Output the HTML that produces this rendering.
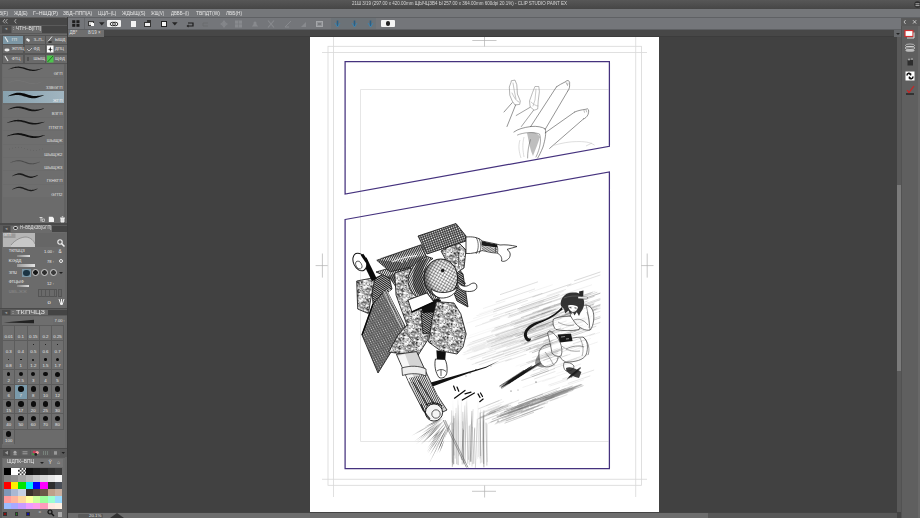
<!DOCTYPE html>
<html><head><meta charset="utf-8">
<style>
*{margin:0;padding:0;box-sizing:border-box}
html,body{width:920px;height:518px;overflow:hidden;background:#434343;font-family:"Liberation Sans",sans-serif}
.a{position:absolute}
.t{position:absolute;white-space:nowrap;line-height:1;color:#e6e6e6}
svg{overflow:visible}
</style></head><body>
<div class="a" style="left:0px;top:0px;width:920px;height:9px;background:linear-gradient(#575757,#464646);"></div>
<div id="f1" class="t" style="left:352px;top:2.2px;font-size:4.6px;color:#d6d6d6;transform:scaleX(0.9764);transform-origin:0 0;">21Ш 3/19 (297.00 x 420.00mm ЩЫЧЦЗB4 Ы 257.00 x 364.00mm 600dpi 20.1%) - CLIP STUDIO PAINT EX</div>
<svg class="a" style="left:913.5px;top:1px" width="7" height="7" viewBox="0 0 7 7"><circle cx="3.5" cy="3.5" r="3.2" fill="#2e2e2e"/><path d="M1.5 2.8 H5.5 M1.5 4.6 H5.5" stroke="#ccc" stroke-width="0.8"/></svg>
<div class="a" style="left:0px;top:9px;width:920px;height:8px;background:#75777a;"></div>
<div id="f2" class="t" style="left:-1px;top:11.3px;font-size:5px;color:#e4e4e4;transform:scaleX(0.9246);transform-origin:0 0;">В(F)</div>
<div id="f3" class="t" style="left:13.6px;top:11.3px;font-size:5px;color:#e4e4e4;transform:scaleX(0.9269);transform-origin:0 0;">ЖД(E)</div>
<div id="f4" class="t" style="left:33.3px;top:11.3px;font-size:5px;color:#e4e4e4;transform:scaleX(1.0533);transform-origin:0 0;">Г–НШД(P)</div>
<div id="f5" class="t" style="left:63.2px;top:11.3px;font-size:5px;color:#e4e4e4;transform:scaleX(0.9759);transform-origin:0 0;">ЗБД–ППП(A)</div>
<div id="f6" class="t" style="left:97.8px;top:11.3px;font-size:5px;color:#e4e4e4;transform:scaleX(0.9398);transform-origin:0 0;">ЦЦЛ–(L)</div>
<div id="f7" class="t" style="left:121.6px;top:11.3px;font-size:5px;color:#e4e4e4;transform:scaleX(0.9875);transform-origin:0 0;">ЖДЫЩ(S)</div>
<div id="f8" class="t" style="left:151px;top:11.3px;font-size:5px;color:#e4e4e4;transform:scaleX(0.8133);transform-origin:0 0;">ЖЩ(V)</div>
<div id="f9" class="t" style="left:171px;top:11.3px;font-size:5px;color:#e4e4e4;transform:scaleX(0.8636);transform-origin:0 0;">ДВВБ–(I)</div>
<div id="f10" class="t" style="left:196px;top:11.3px;font-size:5px;color:#e4e4e4;transform:scaleX(0.9802);transform-origin:0 0;">ТВПДТ(W)</div>
<div id="f11" class="t" style="left:226px;top:11.3px;font-size:5px;color:#e4e4e4;transform:scaleX(0.9499);transform-origin:0 0;">ЛВБ(H)</div>
<div class="a" style="left:0px;top:17px;width:920px;height:1px;background:#5f6164;"></div>
<div class="a" style="left:67px;top:18px;width:834px;height:11.5px;background:#74767a;"></div>
<div class="a" style="left:67px;top:28.5px;width:834px;height:1px;background:#5e6063;"></div>
<svg class="a" style="left:71.5px;top:20.3px" width="8" height="7" viewBox="0 0 8 7"><rect x="0.2" y="0.2" width="3.1" height="2.9" fill="#1e1e1e"/><rect x="4.4" y="0.2" width="3.1" height="2.9" fill="#1e1e1e"/><rect x="0.2" y="3.9" width="3.1" height="2.9" fill="#1e1e1e"/><rect x="4.4" y="3.9" width="3.1" height="2.9" fill="#1e1e1e"/></svg>
<div class="a" style="left:83.5px;top:18px;width:1px;height:10.5px;background:#66686b;"></div>
<div class="a" style="left:88px;top:21px;width:5.5px;height:4.5px;background:#cfcfcf;border:0.8px solid #3a3a3a"></div>
<div class="a" style="left:91px;top:23.3px;width:3.2px;height:3px;background:#fafafa;"></div>
<svg class="a" style="left:99.3px;top:22px" width="6" height="4" viewBox="0 0 6 4"><path d="M0 0.3 H5.6 L2.8 3.6Z" fill="#262626"/></svg>
<div class="a" style="left:106.5px;top:20px;width:14.5px;height:7px;background:#f2f2f2;border-radius:1px"></div>
<svg class="a" style="left:109px;top:20.5px" width="10" height="6" viewBox="0 0 10 6"><ellipse cx="3.8" cy="3" rx="2.6" ry="1.8" fill="none" stroke="#222" stroke-width="0.9"/><ellipse cx="6.2" cy="3" rx="2.6" ry="1.8" fill="none" stroke="#222" stroke-width="0.9"/></svg>
<div class="a" style="left:131px;top:20.5px;width:4.5px;height:6px;background:#f4f4f4;"></div>
<div class="a" style="left:144px;top:22px;width:7px;height:4.5px;background:#eee;border:0.6px solid #333"></div>
<div class="a" style="left:147px;top:20.2px;width:4px;height:2.5px;background:#333;"></div>
<div class="a" style="left:161px;top:20.5px;width:5.5px;height:6px;background:#f6f6f6;border:0.8px solid #222"></div>
<svg class="a" style="left:171.5px;top:22px" width="6" height="4" viewBox="0 0 6 4"><path d="M0 0.3 H5.6 L2.8 3.6Z" fill="#262626"/></svg>
<svg class="a" style="left:186px;top:20.5px" width="9" height="7" viewBox="0 0 9 7"><path d="M2 2 H7 V5 H2" fill="none" stroke="#1c1c1c" stroke-width="1.2"/><path d="M0.5 5 L2.5 3.5 L2.5 6.5Z" fill="#1c1c1c"/></svg>
<svg class="a" style="left:201px;top:20.5px" width="9" height="7" viewBox="0 0 9 7"><path d="M7 2 H2 V5 H7" fill="none" stroke="#6a6c6f" stroke-width="1"/></svg>
<svg class="a" style="left:215px;top:19px" width="112" height="10" viewBox="0 0 112 10" opacity="0.55"><path d="M9 1.5 V8.5 M5.5 5 H12.5" stroke="#9a9ca0" stroke-width="1.2"/><circle cx="9" cy="5" r="2.2" fill="none" stroke="#9a9ca0" stroke-width="0.8"/><rect x="20" y="1.5" width="7" height="7" fill="#9a9ca0"/><path d="M20 5 H27 M23.5 1.5 V8.5" stroke="#76787b" stroke-width="0.6"/><path d="M37 7.5 L40 3 L43 7.5 Z" fill="#9a9ca0"/><circle cx="40" cy="4" r="1.5" fill="#9a9ca0"/><path d="M53 1.5 L59 8.5 M59 1.5 L53 8.5" stroke="#9a9ca0" stroke-width="1.1"/><path d="M70 8 L76 2 M70 8 H74" stroke="#9a9ca0" stroke-width="1"/><path d="M86 8 L91 3 L91 8Z" fill="#9a9ca0"/></svg>
<div class="a" style="left:316px;top:20.5px;width:6.5px;height:6.5px;background:#8e9094;border:0.8px solid #a4a6a9"></div>
<div class="a" style="left:318px;top:22.5px;width:2.5px;height:2.5px;background:#77797c;"></div>
<div class="a" style="left:331px;top:18px;width:45px;height:10.5px;background:#6c7277;"></div>
<svg class="a" style="left:334.4px;top:19.5px" width="7" height="8" viewBox="0 0 7 8"><path d="M3.5 0.5 V6" stroke="#2a5f86" stroke-width="1.6"/><path d="M1 3 L3.5 7 L6 3" fill="none" stroke="#3a86b3" stroke-width="0.9"/></svg>
<svg class="a" style="left:351px;top:19.5px" width="7" height="8" viewBox="0 0 7 8"><path d="M3.5 0.5 V6" stroke="#2a5f86" stroke-width="1.6"/><path d="M1 3 L3.5 7 L6 3" fill="none" stroke="#3a86b3" stroke-width="0.9"/></svg>
<svg class="a" style="left:366.6px;top:19.5px" width="7" height="8" viewBox="0 0 7 8"><path d="M3.5 0.5 V6" stroke="#2a5f86" stroke-width="1.6"/><path d="M1 3 L3.5 7 L6 3" fill="none" stroke="#3a86b3" stroke-width="0.9"/></svg>
<div class="a" style="left:381px;top:20.2px;width:14px;height:6.5px;background:#f4f4f4;border-radius:1px"></div>
<div class="a" style="left:385.5px;top:21.2px;width:4.6px;height:4.6px;border-radius:50%;background:#222"></div>
<div class="a" style="left:67px;top:29.5px;width:830px;height:8px;background:#474747;"></div>
<div class="a" style="left:67px;top:36px;width:830px;height:1px;background:#3c3c3c;"></div>
<div class="a" style="left:68px;top:30px;width:36px;height:6.5px;background:#6e6e6e;"></div>
<div class="t" style="left:69.5px;top:31.4px;font-size:4.5px;color:#dcdcdc;">ДВ*</div>
<div class="t" style="left:88px;top:31.4px;font-size:4.5px;color:#dcdcdc;">8/19 ×</div>
<div class="a" style="left:894px;top:30px;width:7px;height:7px;background:#66686b;"></div>
<div class="a" style="left:895.5px;top:32.5px;width:0;height:0;border-left:2px solid transparent;border-right:2px solid transparent;border-top:2.5px solid #222"></div>
<div class="a" style="left:67px;top:37px;width:830px;height:475px;background:#414141;"></div>
<div class="a" style="left:310px;top:37px;width:349px;height:475px;background:#ffffff;"></div>
<div class="a" style="left:67px;top:512.8px;width:830px;height:5.2px;background:#575757;"></div>
<div class="a" style="left:68px;top:513.3px;width:640px;height:4.7px;background:#6d6d6d;"></div>
<div class="a" style="left:78px;top:514px;width:25px;height:4px;background:#5a5a5a;border-radius:1px"></div>
<div class="t" style="left:89px;top:513.8px;font-size:4.4px;color:#e0e0e0;">20.1%</div>
<div class="a" style="left:110px;top:513px;width:0;height:0;border-left:7px solid transparent;border-right:7px solid transparent;border-bottom:5px solid #333"></div>
<div class="a" style="left:897px;top:37px;width:4px;height:475px;background:#595959;"></div>
<div class="a" style="left:897px;top:185px;width:4px;height:186px;background:#7b7b7b;"></div>
<div class="a" style="left:901px;top:18px;width:19px;height:500px;background:#5f5f5f;"></div>
<div class="a" style="left:901px;top:18px;width:19px;height:8px;background:#595959;"></div>
<svg class="a" style="left:901px;top:18px" width="19" height="8" viewBox="0 0 19 8"><path d="M4.6 2 L3 4 L4.6 6" fill="none" stroke="#c8c8c8" stroke-width="0.9"/><path d="M12 2.2 L15.2 5.6 M15.2 2.2 L12 5.6" stroke="#d0d0d0" stroke-width="0.9"/></svg>
<div class="a" style="left:917.5px;top:26px;width:2.5px;height:492px;background:#686868;"></div>
<div class="a" style="left:901px;top:26px;width:1px;height:492px;background:#525252;"></div>
<div class="a" style="left:0px;top:17px;width:67px;height:501px;background:#5c5c5c;"></div>
<div class="a" style="left:64.5px;top:17px;width:2.5px;height:501px;background:#676767;"></div>
<div class="a" style="left:66.5px;top:17px;width:1px;height:501px;background:#3c3c3c;"></div>
<div class="a" style="left:0px;top:17.5px;width:66.5px;height:7.5px;background:#474747;"></div>
<svg class="a" style="left:0;top:17px" width="20" height="8" viewBox="0 0 20 8"><path d="M5 2 L3 4.2 L5 6.4 M7.5 2 L5.5 4.2 L7.5 6.4 M16.2 2 L14.6 4.2 L16.2 6.4" fill="none" stroke="#b0b0b0" stroke-width="0.9"/></svg>
<div class="a" style="left:0px;top:25px;width:66.5px;height:9px;background:#5a5a5a;"></div>
<div class="a" style="left:2px;top:26px;width:9px;height:7px;background:#4a4a4a;"></div>
<div class="t" style="left:4px;top:27.3px;font-size:4px;color:#9a9a9a;">◄</div>
<div class="a" style="left:11.5px;top:26px;width:30.5px;height:7px;background:#6b6b6b;"></div>
<div id="f12" class="t" style="left:13px;top:27.4px;font-size:4.5px;color:#e0e0e0;transform:scaleX(1.1117);transform-origin:0 0;">: ЧТН–В[ГП]</div>
<div class="a" style="left:42px;top:26px;width:24.5px;height:7px;background:#454545;"></div>
<div class="a" style="left:0px;top:33.5px;width:66.5px;height:1.5px;background:#6a6a6a;"></div>
<div class="a" style="left:1.5px;top:35px;width:65px;height:29px;background:#555555;"></div>
<div class="a" style="left:2.7px;top:35.6px;width:20.5px;height:8.1px;background:#7c97a5;"></div>
<div class="t" style="left:11.7px;top:37.6px;font-size:4.2px;color:#e8e8e8;">ГП</div>
<div class="a" style="left:24.6px;top:35.6px;width:20.2px;height:8.1px;background:#6a6a6a;"></div>
<div class="t" style="left:33.6px;top:37.6px;font-size:4.2px;color:#e8e8e8;">З–П–</div>
<div class="a" style="left:46px;top:35.6px;width:20.5px;height:8.1px;background:#6a6a6a;"></div>
<div class="t" style="left:55px;top:37.6px;font-size:4.2px;color:#e8e8e8;">ЫШД</div>
<div class="a" style="left:2.7px;top:45.3px;width:20.5px;height:8.1px;background:#6a6a6a;"></div>
<div class="t" style="left:11.7px;top:47.3px;font-size:4.2px;color:#e8e8e8;">ЖПЛЦ</div>
<div class="a" style="left:24.6px;top:45.3px;width:20.2px;height:8.1px;background:#6a6a6a;"></div>
<div class="t" style="left:33.6px;top:47.3px;font-size:4.2px;color:#e8e8e8;">ФД</div>
<div class="a" style="left:46px;top:45.3px;width:20.5px;height:8.1px;background:#6a6a6a;"></div>
<div class="t" style="left:55px;top:47.3px;font-size:4.2px;color:#e8e8e8;">ДПЦ</div>
<div class="a" style="left:2.7px;top:54.8px;width:20.5px;height:8.4px;background:#6a6a6a;"></div>
<div class="t" style="left:11.7px;top:56.8px;font-size:4.2px;color:#e8e8e8;">ФТЦ</div>
<div class="a" style="left:24.6px;top:54.8px;width:20.2px;height:8.4px;background:#6a6a6a;"></div>
<div class="t" style="left:33.6px;top:56.8px;font-size:4.2px;color:#e8e8e8;">ШЫЩ</div>
<div class="a" style="left:46px;top:54.8px;width:20.5px;height:8.4px;background:#6a6a6a;"></div>
<div class="t" style="left:55px;top:56.8px;font-size:4.2px;color:#e8e8e8;">ЩФД</div>
<svg class="a" style="left:0;top:0" width="67" height="70" viewBox="0 0 67 70"><path d="M5 37 L8 42" stroke="#eee" stroke-width="1.1"/><path d="M27 38 l3 2 l-1 2 l-3 -2z" fill="#eee"/><path d="M52 36.5 L48 41.5" stroke="#eee" stroke-width="0.9"/><ellipse cx="50" cy="42" rx="2" ry="1" fill="#333"/><ellipse cx="7" cy="50" rx="2.6" ry="1.4" fill="#eee"/><path d="M27 49 l2 2 l3 -3" stroke="#ddd" stroke-width="0.7" fill="none"/><rect x="47" y="45.5" width="6.5" height="7" fill="#fafafa"/><path d="M50.3 46.5 L51 49 L53 49.3 L51 49.7 L50.3 52 L49.6 49.7 L47.6 49.3 L49.6 49z" fill="#111"/><path d="M5 56 L8 61" stroke="#eee" stroke-width="1.1"/><path d="M28 57 V61" stroke="#333" stroke-width="0.9"/><rect x="47" y="55.5" width="6.5" height="7" fill="#4cc44c"/><path d="M47.5 62 L53 56" stroke="#1a5a1a" stroke-width="0.8"/></svg>
<div class="a" style="left:1.5px;top:64px;width:63px;height:159px;background:#6b6b6b;"></div>
<div class="a" style="left:2.5px;top:64.5px;width:61.5px;height:12.25px;background:#6e6e6e;"></div>
<div class="t" style="right:857.5px;top:72.4px;font-size:4.3px;color:#e2e2e2">GГП</div>
<div class="a" style="left:2.5px;top:77.85px;width:61.5px;height:12.25px;background:#6e6e6e;"></div>
<div class="t" style="right:857.5px;top:85.75px;font-size:4.3px;color:#e2e2e2">ЗЗВGГП</div>
<div class="a" style="left:2.5px;top:91.2px;width:61.5px;height:12.25px;background:linear-gradient(90deg,#87a1ae,#a1b5c0);"></div>
<div class="t" style="right:857.5px;top:99.10000000000001px;font-size:4.3px;color:#f4f4f4">ЖГП</div>
<div class="a" style="left:2.5px;top:104.55px;width:61.5px;height:12.25px;background:#6e6e6e;"></div>
<div class="t" style="right:857.5px;top:112.45px;font-size:4.3px;color:#e2e2e2">ВЗГП</div>
<div class="a" style="left:2.5px;top:117.89999999999999px;width:61.5px;height:12.25px;background:#6e6e6e;"></div>
<div class="t" style="right:857.5px;top:125.8px;font-size:4.3px;color:#e2e2e2">ПТКГП</div>
<div class="a" style="left:2.5px;top:131.25px;width:61.5px;height:12.25px;background:#6e6e6e;"></div>
<div class="t" style="right:857.5px;top:139.14999999999998px;font-size:4.3px;color:#e2e2e2">ШЫЩЖ</div>
<div class="a" style="left:2.5px;top:144.60000000000002px;width:61.5px;height:12.25px;background:#6e6e6e;"></div>
<div class="t" style="right:857.5px;top:152.5px;font-size:4.3px;color:#e2e2e2">ШЫЩЖ2</div>
<div class="a" style="left:2.5px;top:157.95000000000002px;width:61.5px;height:12.25px;background:#6e6e6e;"></div>
<div class="t" style="right:857.5px;top:165.85px;font-size:4.3px;color:#e2e2e2">ШЫЩЖ3</div>
<div class="a" style="left:2.5px;top:171.3px;width:61.5px;height:12.25px;background:#6e6e6e;"></div>
<div class="t" style="right:857.5px;top:179.2px;font-size:4.3px;color:#e2e2e2">ГКНКГП</div>
<div class="a" style="left:2.5px;top:184.65px;width:61.5px;height:12.25px;background:#6e6e6e;"></div>
<div class="t" style="right:857.5px;top:192.54999999999998px;font-size:4.3px;color:#e2e2e2">GГП2</div>
<svg class="a" style="left:0;top:0" width="67" height="220" viewBox="0 0 67 220"><path d="M8.50 69.22 L9.92 68.66 L11.33 68.12 L12.75 67.62 L14.17 67.19 L15.58 66.87 L17.00 66.67 L18.42 66.61 L19.83 66.69 L21.25 66.89 L22.67 67.21 L24.08 67.61 L25.50 68.05 L26.92 68.51 L28.33 68.95 L29.75 69.32 L31.17 69.61 L32.58 69.78 L34.00 69.83 L35.42 69.76 L36.83 69.57 L38.25 69.29 L39.67 68.95 L41.08 68.58 L42.50 68.23 L42.50 68.47 L41.08 69.04 L39.67 69.58 L38.25 70.07 L36.83 70.47 L35.42 70.77 L34.00 70.94 L32.58 70.98 L31.17 70.87 L29.75 70.64 L28.33 70.31 L26.92 69.90 L25.50 69.44 L24.08 68.99 L22.67 68.57 L21.25 68.21 L19.83 67.95 L18.42 67.81 L17.00 67.78 L15.58 67.88 L14.17 68.10 L12.75 68.39 L11.33 68.75 L9.92 69.12 L8.50 69.46Z" fill="#151515"/><path d="M8.50 82.57 L9.92 82.09 L11.33 81.61 L12.75 81.17 L14.17 80.79 L15.58 80.51 L17.00 80.34 L18.42 80.31 L19.83 80.41 L21.25 80.64 L22.67 80.97 L24.08 81.38 L25.50 81.83 L26.92 82.29 L28.33 82.71 L29.75 83.07 L31.17 83.34 L32.58 83.48 L34.00 83.50 L35.42 83.39 L36.83 83.17 L38.25 82.84 L39.67 82.44 L41.08 82.01 L42.50 81.58 L42.50 81.82 L41.08 82.31 L39.67 82.78 L38.25 83.22 L36.83 83.58 L35.42 83.84 L34.00 83.97 L32.58 83.97 L31.17 83.84 L29.75 83.59 L28.33 83.24 L26.92 82.82 L25.50 82.37 L24.08 81.92 L22.67 81.50 L21.25 81.16 L19.83 80.92 L18.42 80.80 L17.00 80.81 L15.58 80.95 L14.17 81.20 L12.75 81.55 L11.33 81.96 L9.92 82.39 L8.50 82.81Z" fill="#787878"/><path d="M8.10 95.92 L9.59 95.22 L11.07 94.57 L12.56 93.98 L14.05 93.48 L15.54 93.08 L17.02 92.82 L18.51 92.71 L20.00 92.74 L21.49 92.91 L22.97 93.20 L24.46 93.59 L25.95 94.03 L27.44 94.49 L28.92 94.94 L30.41 95.34 L31.90 95.66 L33.39 95.88 L34.88 95.98 L36.36 95.97 L37.85 95.86 L39.34 95.66 L40.82 95.40 L42.31 95.13 L43.80 94.93 L43.80 95.17 L42.31 95.88 L40.82 96.52 L39.34 97.10 L37.85 97.59 L36.36 97.96 L34.88 98.19 L33.39 98.28 L31.90 98.22 L30.41 98.02 L28.92 97.71 L27.44 97.32 L25.95 96.87 L24.46 96.41 L22.97 95.97 L21.49 95.59 L20.00 95.30 L18.51 95.11 L17.02 95.03 L15.54 95.07 L14.05 95.21 L12.56 95.43 L11.07 95.70 L9.59 95.97 L8.10 96.16Z" fill="#0a0a0a"/><path d="M8.00 109.27 L9.50 108.66 L11.00 108.08 L12.50 107.54 L14.00 107.09 L15.50 106.74 L17.00 106.51 L18.50 106.43 L20.00 106.49 L21.50 106.68 L23.00 106.99 L24.50 107.38 L26.00 107.83 L27.50 108.29 L29.00 108.73 L30.50 109.12 L32.00 109.41 L33.50 109.60 L35.00 109.67 L36.50 109.62 L38.00 109.46 L39.50 109.21 L41.00 108.90 L42.50 108.57 L44.00 108.28 L44.00 108.52 L42.50 109.15 L41.00 109.72 L39.50 110.24 L38.00 110.68 L36.50 111.01 L35.00 111.20 L33.50 111.26 L32.00 111.17 L30.50 110.95 L29.00 110.63 L27.50 110.22 L26.00 109.77 L24.50 109.31 L23.00 108.88 L21.50 108.52 L20.00 108.25 L18.50 108.08 L17.00 108.04 L15.50 108.12 L14.00 108.30 L12.50 108.57 L11.00 108.89 L9.50 109.23 L8.00 109.51Z" fill="#151515"/><path d="M7.00 122.62 L8.58 122.02 L10.17 121.44 L11.75 120.92 L13.33 120.47 L14.92 120.12 L16.50 119.90 L18.08 119.82 L19.67 119.89 L21.25 120.08 L22.83 120.39 L24.42 120.78 L26.00 121.23 L27.58 121.69 L29.17 122.13 L30.75 122.51 L32.33 122.81 L33.92 122.99 L35.50 123.06 L37.08 123.01 L38.67 122.84 L40.25 122.59 L41.83 122.27 L43.42 121.93 L45.00 121.63 L45.00 121.87 L43.42 122.49 L41.83 123.05 L40.25 123.57 L38.67 124.00 L37.08 124.32 L35.50 124.51 L33.92 124.56 L32.33 124.47 L30.75 124.25 L29.17 123.93 L27.58 123.52 L26.00 123.07 L24.42 122.61 L22.83 122.18 L21.25 121.82 L19.67 121.55 L18.08 121.39 L16.50 121.35 L14.92 121.44 L13.33 121.62 L11.75 121.90 L10.17 122.23 L8.58 122.57 L7.00 122.86Z" fill="#151515"/><path d="M7.00 135.97 L8.58 135.35 L10.17 134.76 L11.75 134.22 L13.33 133.76 L14.92 133.40 L16.50 133.18 L18.08 133.09 L19.67 133.15 L21.25 133.34 L22.83 133.64 L24.42 134.03 L26.00 134.48 L27.58 134.94 L29.17 135.38 L30.75 135.77 L32.33 136.07 L33.92 136.26 L35.50 136.34 L37.08 136.29 L38.67 136.14 L40.25 135.89 L41.83 135.59 L43.42 135.26 L45.00 134.98 L45.00 135.22 L43.42 135.85 L41.83 136.44 L40.25 136.97 L38.67 137.41 L37.08 137.74 L35.50 137.94 L33.92 138.00 L32.33 137.91 L30.75 137.70 L29.17 137.37 L27.58 136.97 L26.00 136.52 L24.42 136.06 L22.83 135.63 L21.25 135.27 L19.67 134.99 L18.08 134.83 L16.50 134.78 L14.92 134.85 L13.33 135.03 L11.75 135.29 L10.17 135.61 L8.58 135.94 L7.00 136.21Z" fill="#101010"/><circle cx="9.50" cy="148.99" r="0.45" fill="#5c5c5c"/><circle cx="12.50" cy="148.11" r="0.45" fill="#5c5c5c"/><circle cx="15.50" cy="147.48" r="0.45" fill="#5c5c5c"/><circle cx="18.50" cy="147.31" r="0.45" fill="#5c5c5c"/><circle cx="21.50" cy="147.65" r="0.45" fill="#5c5c5c"/><circle cx="24.50" cy="148.40" r="0.45" fill="#5c5c5c"/><circle cx="27.50" cy="149.31" r="0.45" fill="#5c5c5c"/><circle cx="30.50" cy="150.08" r="0.45" fill="#5c5c5c"/><circle cx="33.50" cy="150.48" r="0.45" fill="#5c5c5c"/><circle cx="36.50" cy="150.37" r="0.45" fill="#5c5c5c"/><circle cx="39.50" cy="149.78" r="0.45" fill="#5c5c5c"/><circle cx="42.50" cy="148.91" r="0.45" fill="#5c5c5c"/><path d="M10.00 162.67 L11.25 162.13 L12.50 161.61 L13.75 161.13 L15.00 160.72 L16.25 160.41 L17.50 160.22 L18.75 160.16 L20.00 160.25 L21.25 160.46 L22.50 160.78 L23.75 161.18 L25.00 161.63 L26.25 162.09 L27.50 162.52 L28.75 162.89 L30.00 163.17 L31.25 163.34 L32.50 163.38 L33.75 163.29 L35.00 163.09 L36.25 162.80 L37.50 162.44 L38.75 162.05 L40.00 161.68 L40.00 161.92 L38.75 162.47 L37.50 162.99 L36.25 163.46 L35.00 163.85 L33.75 164.14 L32.50 164.30 L31.25 164.32 L30.00 164.21 L28.75 163.98 L27.50 163.64 L26.25 163.22 L25.00 162.77 L23.75 162.31 L22.50 161.89 L21.25 161.54 L20.00 161.29 L18.75 161.15 L17.50 161.14 L16.25 161.25 L15.00 161.47 L13.75 161.79 L12.50 162.16 L11.25 162.55 L10.00 162.91Z" fill="#4a4a4a"/><path d="M12.00 176.02 L13.08 175.43 L14.17 174.86 L15.25 174.34 L16.33 173.89 L17.42 173.55 L18.50 173.34 L19.58 173.26 L20.67 173.33 L21.75 173.53 L22.83 173.84 L23.92 174.23 L25.00 174.68 L26.08 175.14 L27.17 175.58 L28.25 175.96 L29.33 176.25 L30.42 176.44 L31.50 176.50 L32.58 176.44 L33.67 176.27 L34.75 176.01 L35.83 175.69 L36.92 175.34 L38.00 175.03 L38.00 175.27 L36.92 175.88 L35.83 176.44 L34.75 176.95 L33.67 177.37 L32.58 177.69 L31.50 177.88 L30.42 177.92 L29.33 177.83 L28.25 177.61 L27.17 177.28 L26.08 176.87 L25.00 176.42 L23.92 175.96 L22.83 175.54 L21.75 175.18 L20.67 174.91 L19.58 174.75 L18.50 174.72 L17.42 174.80 L16.33 175.00 L15.25 175.28 L14.17 175.61 L13.08 175.96 L12.00 176.26Z" fill="#1a1a1a"/><path d="M12.00 189.37 L13.08 188.79 L14.17 188.24 L15.25 187.74 L16.33 187.30 L17.42 186.97 L18.50 186.77 L19.58 186.70 L20.67 186.77 L21.75 186.97 L22.83 187.28 L23.92 187.68 L25.00 188.13 L26.08 188.59 L27.17 189.03 L28.25 189.40 L29.33 189.69 L30.42 189.87 L31.50 189.92 L32.58 189.86 L33.67 189.68 L34.75 189.41 L35.83 189.07 L36.92 188.71 L38.00 188.38 L38.00 188.62 L36.92 189.21 L35.83 189.75 L34.75 190.25 L33.67 190.67 L32.58 190.97 L31.50 191.15 L30.42 191.19 L29.33 191.09 L28.25 190.86 L27.17 190.53 L26.08 190.12 L25.00 189.67 L23.92 189.21 L22.83 188.79 L21.75 188.43 L20.67 188.17 L19.58 188.02 L18.50 187.99 L17.42 188.09 L16.33 188.29 L15.25 188.58 L14.17 188.93 L13.08 189.29 L12.00 189.61Z" fill="#1e1e1e"/></svg>
<div class="a" style="left:64px;top:64px;width:1.5px;height:159px;background:#626262;"></div>
<svg class="a" style="left:38px;top:215px" width="28" height="8" viewBox="0 0 28 8"><path d="M1.5 2.5 H4.5 M3 2.5 V6.5" stroke="#e8e8e8" stroke-width="0.8"/><rect x="4.2" y="4" width="2.4" height="2.6" fill="none" stroke="#e8e8e8" stroke-width="0.6"/><path d="M10.8 1.8 H14.5 L16 3.3 V7 H10.8 Z" fill="#f4f4f4"/><path d="M22 3 H27 M23 3 V7 H26 V3 M23.8 1.8 H25.2" stroke="#f0f0f0" stroke-width="0.9" fill="#ddd"/></svg>
<div class="a" style="left:0px;top:222.5px;width:66.5px;height:2px;background:#4a4a4a;"></div>
<div class="a" style="left:0px;top:224.5px;width:66.5px;height:7.5px;background:#5a5a5a;"></div>
<div class="a" style="left:2.6px;top:225.5px;width:7.8px;height:6px;background:#4a4a4a;"></div>
<div class="t" style="left:4.3px;top:226.5px;font-size:4px;color:#9a9a9a;">◄</div>
<div class="a" style="left:11.3px;top:225.5px;width:40.7px;height:6px;background:#6b6b6b;"></div>
<div class="a" style="left:13.3px;top:226px;width:4.4px;height:4.4px;border-radius:50%;background:#222;border:0.6px solid #ccc"></div>
<div id="f13" class="t" style="left:19.5px;top:226.4px;font-size:4.5px;color:#e0e0e0;transform:scaleX(0.9073);transform-origin:0 0;">Н–ВБДКЗВ[GГП]</div>
<div class="a" style="left:52px;top:225.5px;width:14.5px;height:6px;background:#444;"></div>
<div class="a" style="left:1.5px;top:232px;width:63px;height:75.5px;background:#6b6b6b;"></div>
<div class="a" style="left:2.6px;top:233px;width:32.1px;height:14px;background:#b6b6b6;"></div>
<svg class="a" style="left:2.6px;top:233px" width="32" height="14" viewBox="0 0 32 14"><path d="M8 12 C 12 7, 18 4, 23 4 C 28 4.5, 31 8, 32 11 L32 14 L8 14Z" fill="#c8c8c8"/><path d="M8 12 C 12 7, 18 4, 23 4 C 28 4.5, 31 8, 32 11" fill="none" stroke="#8c8c8c" stroke-width="0.9"/><rect x="0.5" y="0.5" width="12" height="4.5" fill="#9a9a9a"/></svg>
<div class="t" style="left:3.5px;top:233.7px;font-size:3.8px;color:#eee;">GГП</div>
<div class="a" style="left:34.7px;top:233px;width:30px;height:14px;background:#666;"></div>
<svg class="a" style="left:57px;top:239px" width="8" height="8" viewBox="0 0 8 8"><circle cx="3" cy="3" r="2.2" fill="none" stroke="#eee" stroke-width="1.1"/><path d="M4.5 4.5 L7.5 7.5" stroke="#eee" stroke-width="1.5"/></svg>
<div class="t" style="left:8.7px;top:249.3px;font-size:4.1px;color:#ececec;">ТКПЧЦЗ</div>
<div class="a" style="left:16.5px;top:254.5px;width:13px;height:2.2px;background:linear-gradient(90deg,#888,#ddd);"></div>
<div class="t" style="left:44px;top:250px;font-size:4.1px;color:#ececec;">1.00 :</div>
<div class="t" style="left:58.5px;top:249.5px;font-size:4.6px;color:#e8e8e8;">&amp;</div>
<div class="t" style="left:8.7px;top:258.8px;font-size:4.1px;color:#ececec;">ЮЭДД</div>
<div class="a" style="left:16.5px;top:264px;width:18.2px;height:3px;background:linear-gradient(90deg,#999,#e4e4e4);"></div>
<div class="t" style="left:47px;top:259.5px;font-size:4.1px;color:#ececec;">78 :</div>
<div class="a" style="left:58.5px;top:258.7px;width:4px;height:4px;border:0.8px solid #eee;border-radius:50%"></div>
<div class="t" style="left:8.7px;top:271px;font-size:4.1px;color:#ececec;">ЗПЧ</div>
<div class="a" style="left:21.7px;top:268.5px;width:9.7px;height:8px;background:#7b96a5;"></div>
<div class="a" style="left:23.2px;top:269.5px;width:6.6px;height:6.6px;border-radius:50%;background:#1b3443"></div>
<div class="a" style="left:32.0px;top:269.1px;width:7.4px;height:7.4px;border-radius:50%;background:#151515;border:1.4px solid #d4d4d4"></div>
<div class="a" style="left:40.9px;top:269.1px;width:7.4px;height:7.4px;border-radius:50%;background:#2e2e2e;border:1.4px solid #d4d4d4"></div>
<div class="a" style="left:49.599999999999994px;top:269.1px;width:7.4px;height:7.4px;border-radius:50%;background:#3a3a3a;border:1.4px solid #d4d4d4"></div>
<div class="a" style="left:59px;top:272px;width:0;height:0;border-left:2px solid transparent;border-right:2px solid transparent;border-top:2.5px solid #222"></div>
<div class="t" style="left:8.7px;top:279.7px;font-size:4.1px;color:#ececec;">ФТЦЫФ</div>
<div class="a" style="left:16.5px;top:285px;width:12.2px;height:2.2px;background:linear-gradient(90deg,#888,#ddd);"></div>
<div class="t" style="left:47px;top:281.5px;font-size:4.1px;color:#ececec;">12 :</div>
<div class="t" style="left:8.7px;top:290px;font-size:4.1px;color:#8c8c8c;">ЧВБ–ЖЖ</div>
<div class="a" style="left:38.2px;top:288.6px;width:19.1px;height:8.7px;background:#6a6a6a;border:0.7px solid #555"></div>
<div class="a" style="left:41.0px;top:289.5px;width:0.7px;height:7px;background:#575757;"></div>
<div class="a" style="left:45.2px;top:289.5px;width:0.7px;height:7px;background:#575757;"></div>
<div class="a" style="left:49.4px;top:289.5px;width:0.7px;height:7px;background:#575757;"></div>
<div class="a" style="left:53.6px;top:289.5px;width:0.7px;height:7px;background:#575757;"></div>
<div class="a" style="left:58px;top:288.6px;width:3.7px;height:8.7px;background:#666;border:0.6px solid #555"></div>
<div class="t" style="left:47.5px;top:298.5px;font-size:6px;color:#e8e8e8;">o</div>
<svg class="a" style="left:58px;top:298px" width="7" height="8" viewBox="0 0 7 8"><path d="M1 1 L3 7 M3.5 1 L3.5 7 M6 1 L4 7" stroke="#eee" stroke-width="1"/></svg>
<div class="a" style="left:0px;top:307.5px;width:66.5px;height:1.8px;background:#4a4a4a;"></div>
<div class="a" style="left:0px;top:309.3px;width:66.5px;height:6.5px;background:#5a5a5a;"></div>
<div class="a" style="left:2.3px;top:309.8px;width:7.5px;height:5.6px;background:#4b4b4b;"></div>
<div class="t" style="left:3.9px;top:310.6px;font-size:4px;color:#999;">◄</div>
<div class="a" style="left:11px;top:309.8px;width:36.5px;height:5.6px;background:#6b6b6b;"></div>
<div id="f14" class="t" style="left:12.2px;top:310.5px;font-size:4.5px;color:#e0e0e0;transform:scaleX(1.6372);transform-origin:0 0;">: ТКПЧЦЗ</div>
<div class="a" style="left:47.5px;top:309.8px;width:19px;height:5.6px;background:#444;"></div>
<div class="a" style="left:1.5px;top:316px;width:63px;height:132px;background:#6b6b6b;"></div>
<div class="a" style="left:33.6px;top:317px;width:19.7px;height:7.5px;background:#6e6e6e;"></div>
<svg class="a" style="left:3px;top:319px" width="32" height="5" viewBox="0 0 32 5"><path d="M0.5 3.5 L31 0.8 L31 4.2Z" fill="#222"/></svg>
<div class="t" style="left:54.5px;top:318.5px;font-size:4.1px;color:#e0e0e0;">7.00 :</div>
<div class="a" style="left:2.4px;top:325.2px;width:61.6px;height:118.4px;background:#5c5c5c;"></div>
<div class="a" style="left:3.25px;top:325.85px;width:10.9px;height:14.100000000000012px;background:#6f6f6f;"></div>
<div class="t" style="left:2.90px;width:11.60px;text-align:center;top:334.70px;font-size:4.4px;color:#e6e6e6">0.01</div>
<div class="a" style="left:14.85px;top:325.85px;width:12.0px;height:14.100000000000012px;background:#6f6f6f;"></div>
<div class="t" style="left:14.50px;width:12.70px;text-align:center;top:334.70px;font-size:4.4px;color:#e6e6e6">0.1</div>
<div class="a" style="left:27.55px;top:325.85px;width:11.5px;height:14.100000000000012px;background:#6f6f6f;"></div>
<div class="t" style="left:27.20px;width:12.20px;text-align:center;top:334.70px;font-size:4.4px;color:#e6e6e6">0.15</div>
<div class="a" style="left:39.75px;top:325.85px;width:11.500000000000004px;height:14.100000000000012px;background:#6f6f6f;"></div>
<div class="t" style="left:39.40px;width:12.20px;text-align:center;top:334.70px;font-size:4.4px;color:#e6e6e6">0.2</div>
<div class="a" style="left:51.95px;top:325.85px;width:11.2px;height:14.100000000000012px;background:#6f6f6f;"></div>
<div class="t" style="left:51.60px;width:11.90px;text-align:center;top:334.70px;font-size:4.4px;color:#e6e6e6">0.25</div>
<div class="a" style="left:3.25px;top:340.65000000000003px;width:10.9px;height:13.99999999999999px;background:#6f6f6f;"></div>
<div class="t" style="left:2.90px;width:11.60px;text-align:center;top:349.50px;font-size:4.4px;color:#e6e6e6">0.3</div>
<div class="a" style="left:14.85px;top:340.65000000000003px;width:12.0px;height:13.99999999999999px;background:#6f6f6f;"></div>
<div class="t" style="left:14.50px;width:12.70px;text-align:center;top:349.50px;font-size:4.4px;color:#e6e6e6">0.4</div>
<div class="a" style="left:27.55px;top:340.65000000000003px;width:11.5px;height:13.99999999999999px;background:#6f6f6f;"></div>
<div class="a" style="left:32.80px;top:344.40px;width:1px;height:1px;border-radius:50%;background:#0c0c0c"></div>
<div class="t" style="left:27.20px;width:12.20px;text-align:center;top:349.50px;font-size:4.4px;color:#e6e6e6">0.5</div>
<div class="a" style="left:39.75px;top:340.65000000000003px;width:11.500000000000004px;height:13.99999999999999px;background:#6f6f6f;"></div>
<div class="a" style="left:45.00px;top:344.40px;width:1px;height:1px;border-radius:50%;background:#0c0c0c"></div>
<div class="t" style="left:39.40px;width:12.20px;text-align:center;top:349.50px;font-size:4.4px;color:#e6e6e6">0.6</div>
<div class="a" style="left:51.95px;top:340.65000000000003px;width:11.2px;height:13.99999999999999px;background:#6f6f6f;"></div>
<div class="a" style="left:56.95px;top:344.30px;width:1.2px;height:1.2px;border-radius:50%;background:#0c0c0c"></div>
<div class="t" style="left:51.60px;width:11.90px;text-align:center;top:349.50px;font-size:4.4px;color:#e6e6e6">0.7</div>
<div class="a" style="left:3.25px;top:355.35px;width:10.9px;height:13.8px;background:#6f6f6f;"></div>
<div class="a" style="left:7.95px;top:358.85px;width:1.5px;height:1.5px;border-radius:50%;background:#0c0c0c"></div>
<div class="t" style="left:2.90px;width:11.60px;text-align:center;top:364.20px;font-size:4.4px;color:#e6e6e6">0.8</div>
<div class="a" style="left:14.85px;top:355.35px;width:12.0px;height:13.8px;background:#6f6f6f;"></div>
<div class="a" style="left:19.95px;top:358.70px;width:1.8px;height:1.8px;border-radius:50%;background:#0c0c0c"></div>
<div class="t" style="left:14.50px;width:12.70px;text-align:center;top:364.20px;font-size:4.4px;color:#e6e6e6">1</div>
<div class="a" style="left:27.55px;top:355.35px;width:11.5px;height:13.8px;background:#6f6f6f;"></div>
<div class="a" style="left:32.30px;top:358.60px;width:2px;height:2px;border-radius:50%;background:#0c0c0c"></div>
<div class="t" style="left:27.20px;width:12.20px;text-align:center;top:364.20px;font-size:4.4px;color:#e6e6e6">1.2</div>
<div class="a" style="left:39.75px;top:355.35px;width:11.500000000000004px;height:13.8px;background:#6f6f6f;"></div>
<div class="a" style="left:44.25px;top:358.35px;width:2.5px;height:2.5px;border-radius:50%;background:#0c0c0c"></div>
<div class="t" style="left:39.40px;width:12.20px;text-align:center;top:364.20px;font-size:4.4px;color:#e6e6e6">1.5</div>
<div class="a" style="left:51.95px;top:355.35px;width:11.2px;height:13.8px;background:#6f6f6f;"></div>
<div class="a" style="left:56.05px;top:358.10px;width:3px;height:3px;border-radius:50%;background:#0c0c0c"></div>
<div class="t" style="left:51.60px;width:11.90px;text-align:center;top:364.20px;font-size:4.4px;color:#e6e6e6">1.7</div>
<div class="a" style="left:3.25px;top:369.85px;width:10.9px;height:14.3px;background:#6f6f6f;"></div>
<div class="a" style="left:6.95px;top:372.35px;width:3.5px;height:3.5px;border-radius:50%;background:#0c0c0c"></div>
<div class="t" style="left:2.90px;width:11.60px;text-align:center;top:378.70px;font-size:4.4px;color:#e6e6e6">2</div>
<div class="a" style="left:14.85px;top:369.85px;width:12.0px;height:14.3px;background:#6f6f6f;"></div>
<div class="a" style="left:18.85px;top:372.10px;width:4px;height:4px;border-radius:50%;background:#0c0c0c"></div>
<div class="t" style="left:14.50px;width:12.70px;text-align:center;top:378.70px;font-size:4.4px;color:#e6e6e6">2.5</div>
<div class="a" style="left:27.55px;top:369.85px;width:11.5px;height:14.3px;background:#6f6f6f;"></div>
<div class="a" style="left:31.20px;top:372.00px;width:4.2px;height:4.2px;border-radius:50%;background:#0c0c0c"></div>
<div class="t" style="left:27.20px;width:12.20px;text-align:center;top:378.70px;font-size:4.4px;color:#e6e6e6">3</div>
<div class="a" style="left:39.75px;top:369.85px;width:11.500000000000004px;height:14.3px;background:#6f6f6f;"></div>
<div class="a" style="left:43.10px;top:371.70px;width:4.8px;height:4.8px;border-radius:50%;background:#0c0c0c"></div>
<div class="t" style="left:39.40px;width:12.20px;text-align:center;top:378.70px;font-size:4.4px;color:#e6e6e6">4</div>
<div class="a" style="left:51.95px;top:369.85px;width:11.2px;height:14.3px;background:#6f6f6f;"></div>
<div class="a" style="left:55.05px;top:371.60px;width:5px;height:5px;border-radius:50%;background:#0c0c0c"></div>
<div class="t" style="left:51.60px;width:11.90px;text-align:center;top:378.70px;font-size:4.4px;color:#e6e6e6">5</div>
<div class="a" style="left:3.25px;top:384.85px;width:10.9px;height:14.199999999999978px;background:#6f6f6f;"></div>
<div class="a" style="left:5.95px;top:386.35px;width:5.5px;height:5.5px;border-radius:50%;background:#0c0c0c"></div>
<div class="t" style="left:2.90px;width:11.60px;text-align:center;top:393.70px;font-size:4.4px;color:#e6e6e6">6</div>
<div class="a" style="left:14.85px;top:384.85px;width:12.0px;height:14.199999999999978px;background:#7a9aab;"></div>
<div class="a" style="left:18.10px;top:386.35px;width:5.5px;height:5.5px;border-radius:50%;background:#0c0c0c"></div>
<div class="t" style="left:14.50px;width:12.70px;text-align:center;top:393.70px;font-size:4.4px;color:#e6e6e6">7</div>
<div class="a" style="left:27.55px;top:384.85px;width:11.5px;height:14.199999999999978px;background:#6f6f6f;"></div>
<div class="a" style="left:30.55px;top:386.35px;width:5.5px;height:5.5px;border-radius:50%;background:#0c0c0c"></div>
<div class="t" style="left:27.20px;width:12.20px;text-align:center;top:393.70px;font-size:4.4px;color:#e6e6e6">8</div>
<div class="a" style="left:39.75px;top:384.85px;width:11.500000000000004px;height:14.199999999999978px;background:#6f6f6f;"></div>
<div class="a" style="left:42.75px;top:386.35px;width:5.5px;height:5.5px;border-radius:50%;background:#0c0c0c"></div>
<div class="t" style="left:39.40px;width:12.20px;text-align:center;top:393.70px;font-size:4.4px;color:#e6e6e6">10</div>
<div class="a" style="left:51.95px;top:384.85px;width:11.2px;height:14.199999999999978px;background:#6f6f6f;"></div>
<div class="a" style="left:54.80px;top:386.35px;width:5.5px;height:5.5px;border-radius:50%;background:#0c0c0c"></div>
<div class="t" style="left:51.60px;width:11.90px;text-align:center;top:393.70px;font-size:4.4px;color:#e6e6e6">12</div>
<div class="a" style="left:3.25px;top:399.75px;width:10.9px;height:13.700000000000035px;background:#6f6f6f;"></div>
<div class="a" style="left:5.95px;top:401.25px;width:5.5px;height:5.5px;border-radius:50%;background:#0c0c0c"></div>
<div class="t" style="left:2.90px;width:11.60px;text-align:center;top:408.60px;font-size:4.4px;color:#e6e6e6">15</div>
<div class="a" style="left:14.85px;top:399.75px;width:12.0px;height:13.700000000000035px;background:#6f6f6f;"></div>
<div class="a" style="left:18.10px;top:401.25px;width:5.5px;height:5.5px;border-radius:50%;background:#0c0c0c"></div>
<div class="t" style="left:14.50px;width:12.70px;text-align:center;top:408.60px;font-size:4.4px;color:#e6e6e6">17</div>
<div class="a" style="left:27.55px;top:399.75px;width:11.5px;height:13.700000000000035px;background:#6f6f6f;"></div>
<div class="a" style="left:30.55px;top:401.25px;width:5.5px;height:5.5px;border-radius:50%;background:#0c0c0c"></div>
<div class="t" style="left:27.20px;width:12.20px;text-align:center;top:408.60px;font-size:4.4px;color:#e6e6e6">20</div>
<div class="a" style="left:39.75px;top:399.75px;width:11.500000000000004px;height:13.700000000000035px;background:#6f6f6f;"></div>
<div class="a" style="left:42.75px;top:401.25px;width:5.5px;height:5.5px;border-radius:50%;background:#0c0c0c"></div>
<div class="t" style="left:39.40px;width:12.20px;text-align:center;top:408.60px;font-size:4.4px;color:#e6e6e6">25</div>
<div class="a" style="left:51.95px;top:399.75px;width:11.2px;height:13.700000000000035px;background:#6f6f6f;"></div>
<div class="a" style="left:54.80px;top:401.25px;width:5.5px;height:5.5px;border-radius:50%;background:#0c0c0c"></div>
<div class="t" style="left:51.60px;width:11.90px;text-align:center;top:408.60px;font-size:4.4px;color:#e6e6e6">30</div>
<div class="a" style="left:3.25px;top:414.15000000000003px;width:10.9px;height:15.100000000000012px;background:#6f6f6f;"></div>
<div class="a" style="left:5.95px;top:415.65px;width:5.5px;height:5.5px;border-radius:50%;background:#0c0c0c"></div>
<div class="t" style="left:2.90px;width:11.60px;text-align:center;top:423.00px;font-size:4.4px;color:#e6e6e6">40</div>
<div class="a" style="left:14.85px;top:414.15000000000003px;width:12.0px;height:15.100000000000012px;background:#6f6f6f;"></div>
<div class="a" style="left:18.10px;top:415.65px;width:5.5px;height:5.5px;border-radius:50%;background:#0c0c0c"></div>
<div class="t" style="left:14.50px;width:12.70px;text-align:center;top:423.00px;font-size:4.4px;color:#e6e6e6">50</div>
<div class="a" style="left:27.55px;top:414.15000000000003px;width:11.5px;height:15.100000000000012px;background:#6f6f6f;"></div>
<div class="a" style="left:30.55px;top:415.65px;width:5.5px;height:5.5px;border-radius:50%;background:#0c0c0c"></div>
<div class="t" style="left:27.20px;width:12.20px;text-align:center;top:423.00px;font-size:4.4px;color:#e6e6e6">60</div>
<div class="a" style="left:39.75px;top:414.15000000000003px;width:11.500000000000004px;height:15.100000000000012px;background:#6f6f6f;"></div>
<div class="a" style="left:42.75px;top:415.65px;width:5.5px;height:5.5px;border-radius:50%;background:#0c0c0c"></div>
<div class="t" style="left:39.40px;width:12.20px;text-align:center;top:423.00px;font-size:4.4px;color:#e6e6e6">70</div>
<div class="a" style="left:51.95px;top:414.15000000000003px;width:11.2px;height:15.100000000000012px;background:#6f6f6f;"></div>
<div class="a" style="left:54.80px;top:415.65px;width:5.5px;height:5.5px;border-radius:50%;background:#0c0c0c"></div>
<div class="t" style="left:51.60px;width:11.90px;text-align:center;top:423.00px;font-size:4.4px;color:#e6e6e6">80</div>
<div class="a" style="left:3.25px;top:429.95000000000005px;width:10.9px;height:15.199999999999978px;background:#6f6f6f;"></div>
<div class="a" style="left:5.95px;top:431.45px;width:5.5px;height:5.5px;border-radius:50%;background:#0c0c0c"></div>
<div class="t" style="left:2.90px;width:11.60px;text-align:center;top:438.80px;font-size:4.4px;color:#e6e6e6">100</div>
<div class="a" style="left:14.5px;top:429.6px;width:49.5px;height:14px;background:#6b6b6b;"></div>
<div class="a" style="left:0px;top:448px;width:66.5px;height:2px;background:#4a4a4a;"></div>
<div class="a" style="left:0px;top:449px;width:66.5px;height:7.5px;background:#5a5a5a;"></div>
<div class="a" style="left:2.7px;top:449.8px;width:7.6px;height:6px;background:#4e4e4e;"></div>
<svg class="a" style="left:0;top:449px" width="67" height="8" viewBox="0 0 67 8"><path d="M8 1.8 L4.8 3.8 L8 5.8Z" fill="#9a9a9a"/><rect x="11" y="0.8" width="8.5" height="6" fill="#5f5f5f"/><circle cx="15" cy="3.2" r="1.5" fill="#aaa"/><rect x="13.5" y="4.6" width="3.2" height="1.6" fill="#999"/><rect x="20.5" y="0.8" width="9.5" height="6" fill="#5f5f5f"/><path d="M22.5 2.8 H27.5 M22.5 4.8 H27.5" stroke="#b0b0b0" stroke-width="0.8"/><rect x="31" y="0.8" width="9.5" height="6" fill="#656565"/><circle cx="34.3" cy="3" r="1.6" fill="#d03a5a"/><circle cx="37.2" cy="3.6" r="1.6" fill="#f0a0a0"/><circle cx="35.8" cy="5.4" r="1.4" fill="#222"/><circle cx="33.2" cy="5.2" r="1" fill="#40a040"/><rect x="41" y="0.8" width="9.5" height="6" fill="#5f5f5f"/><path d="M43.5 2 V6 M45.5 2 V6 M47.5 2 V6" stroke="#8a9a90" stroke-width="0.6"/><rect x="51" y="0.8" width="9" height="6" fill="#5f5f5f"/><rect x="54" y="2.2" width="3" height="3.5" fill="#999"/><path d="M61.5 3 H65 L63.25 5Z" fill="#222"/></svg>
<div class="a" style="left:1.5px;top:457.5px;width:63px;height:60.5px;background:#6b6b6b;"></div>
<div class="a" style="left:3px;top:458.6px;width:59.5px;height:8px;background:#747474;"></div>
<div id="f15" class="t" style="left:6.5px;top:460.3px;font-size:4.6px;color:#e6e6e6;transform:scaleX(1.0537);transform-origin:0 0;">ШДПК–ВПЦ</div>
<div class="a" style="left:40px;top:462px;width:0;height:0;border-left:2px solid transparent;border-right:2px solid transparent;border-top:2.5px solid #222"></div>
<div class="t" style="left:48.5px;top:459.8px;font-size:5px;color:#eee;">Ÿ</div>
<div class="t" style="left:57px;top:459.8px;font-size:5px;color:#ddd;">⌂</div>
<div class="a" style="left:3.5px;top:467.5px;width:7.65px;height:7.549999999999978px;background:#000000;"></div>
<div class="a" style="left:11px;top:467.5px;width:7.450000000000001px;height:7.549999999999978px;background:#ffffff;"></div>
<div class="a" style="left:18.3px;top:467.5px;width:7.65px;height:7.549999999999978px;background:#fff;background-image:linear-gradient(45deg,#222 25%,transparent 25%,transparent 75%,#222 75%),linear-gradient(45deg,#222 25%,transparent 25%,transparent 75%,#222 75%);background-size:3.6px 3.6px;background-position:0 0,1.8px 1.8px"></div>
<div class="a" style="left:25.8px;top:467.5px;width:7.450000000000001px;height:7.549999999999978px;background:#121212;"></div>
<div class="a" style="left:33.1px;top:467.5px;width:7.4499999999999975px;height:7.549999999999978px;background:#1c1c1c;"></div>
<div class="a" style="left:40.4px;top:467.5px;width:7.350000000000003px;height:7.549999999999978px;background:#262626;"></div>
<div class="a" style="left:47.6px;top:467.5px;width:7.4499999999999975px;height:7.549999999999978px;background:#2f2f2f;"></div>
<div class="a" style="left:54.9px;top:467.5px;width:7.250000000000002px;height:7.549999999999978px;background:#393939;"></div>
<div class="a" style="left:3.5px;top:474.9px;width:7.65px;height:7.250000000000023px;background:#858585;"></div>
<div class="a" style="left:11px;top:474.9px;width:7.450000000000001px;height:7.250000000000023px;background:#8f8f8f;"></div>
<div class="a" style="left:18.3px;top:474.9px;width:7.65px;height:7.250000000000023px;background:#a3a3a3;"></div>
<div class="a" style="left:25.8px;top:474.9px;width:7.450000000000001px;height:7.250000000000023px;background:#b6b6b6;"></div>
<div class="a" style="left:33.1px;top:474.9px;width:7.4499999999999975px;height:7.250000000000023px;background:#c9c9c9;"></div>
<div class="a" style="left:40.4px;top:474.9px;width:7.350000000000003px;height:7.250000000000023px;background:#d9d9d9;"></div>
<div class="a" style="left:47.6px;top:474.9px;width:7.4499999999999975px;height:7.250000000000023px;background:#e6e6e6;"></div>
<div class="a" style="left:54.9px;top:474.9px;width:7.250000000000002px;height:7.250000000000023px;background:#f3f3f3;"></div>
<div class="a" style="left:3.5px;top:482px;width:7.65px;height:7.15px;background:#ff0000;"></div>
<div class="a" style="left:11px;top:482px;width:7.450000000000001px;height:7.15px;background:#ffee00;"></div>
<div class="a" style="left:18.3px;top:482px;width:7.65px;height:7.15px;background:#00e600;"></div>
<div class="a" style="left:25.8px;top:482px;width:7.450000000000001px;height:7.15px;background:#00e8ff;"></div>
<div class="a" style="left:33.1px;top:482px;width:7.4499999999999975px;height:7.15px;background:#0000ff;"></div>
<div class="a" style="left:40.4px;top:482px;width:7.350000000000003px;height:7.15px;background:#ff00ff;"></div>
<div class="a" style="left:47.6px;top:482px;width:7.4499999999999975px;height:7.15px;background:#2e2e2e;"></div>
<div class="a" style="left:54.9px;top:482px;width:7.250000000000002px;height:7.15px;background:#4a4f58;"></div>
<div class="a" style="left:3.5px;top:489px;width:7.65px;height:7.15px;background:#8097b6;"></div>
<div class="a" style="left:11px;top:489px;width:7.450000000000001px;height:7.15px;background:#a9b8d2;"></div>
<div class="a" style="left:18.3px;top:489px;width:7.65px;height:7.15px;background:#c7d0e2;"></div>
<div class="a" style="left:25.8px;top:489px;width:7.450000000000001px;height:7.15px;background:#3a302a;"></div>
<div class="a" style="left:33.1px;top:489px;width:7.4499999999999975px;height:7.15px;background:#54463c;"></div>
<div class="a" style="left:40.4px;top:489px;width:7.350000000000003px;height:7.15px;background:#6b5848;"></div>
<div class="a" style="left:47.6px;top:489px;width:7.4499999999999975px;height:7.15px;background:#bfa08a;"></div>
<div class="a" style="left:54.9px;top:489px;width:7.250000000000002px;height:7.15px;background:#c9b0a0;"></div>
<div class="a" style="left:3.5px;top:496px;width:7.65px;height:7.15px;background:#ff9c9c;"></div>
<div class="a" style="left:11px;top:496px;width:7.450000000000001px;height:7.15px;background:#ffb49c;"></div>
<div class="a" style="left:18.3px;top:496px;width:7.65px;height:7.15px;background:#ffd69c;"></div>
<div class="a" style="left:25.8px;top:496px;width:7.450000000000001px;height:7.15px;background:#ffff9c;"></div>
<div class="a" style="left:33.1px;top:496px;width:7.4499999999999975px;height:7.15px;background:#ccff9c;"></div>
<div class="a" style="left:40.4px;top:496px;width:7.350000000000003px;height:7.15px;background:#9cff9c;"></div>
<div class="a" style="left:47.6px;top:496px;width:7.4499999999999975px;height:7.15px;background:#9cffd0;"></div>
<div class="a" style="left:54.9px;top:496px;width:7.250000000000002px;height:7.15px;background:#9cdcff;"></div>
<div class="a" style="left:3.5px;top:503px;width:7.65px;height:6.15px;background:#9cbcff;"></div>
<div class="a" style="left:11px;top:503px;width:7.450000000000001px;height:6.15px;background:#a9a9ff;"></div>
<div class="a" style="left:18.3px;top:503px;width:7.65px;height:6.15px;background:#c99cff;"></div>
<div class="a" style="left:25.8px;top:503px;width:7.450000000000001px;height:6.15px;background:#ec9cff;"></div>
<div class="a" style="left:33.1px;top:503px;width:7.4499999999999975px;height:6.15px;background:#ff9cec;"></div>
<div class="a" style="left:40.4px;top:503px;width:7.350000000000003px;height:6.15px;background:#ff9cbc;"></div>
<div class="a" style="left:47.6px;top:503px;width:7.4499999999999975px;height:6.15px;background:#ffe8e0;"></div>
<div class="a" style="left:54.9px;top:503px;width:7.250000000000002px;height:6.15px;background:#fff0e2;"></div>
<div class="a" style="left:3px;top:512px;width:3.5px;height:3.5px;background:#8a1010;border:0.5px solid #333"></div>
<div class="a" style="left:14.5px;top:512px;width:3.5px;height:3.5px;background:#208020;border:0.5px solid #333"></div>
<div class="a" style="left:26px;top:512px;width:3.5px;height:3.5px;background:#1010a0;border:0.5px solid #333"></div>
<div class="t" style="left:38.5px;top:511px;font-size:4.5px;color:#bbb;">=</div>
<svg class="a" style="left:47px;top:509px" width="8" height="8" viewBox="0 0 8 8"><circle cx="3" cy="3" r="2" fill="none" stroke="#111" stroke-width="1.2"/><path d="M4.5 4.5 L7 7" stroke="#111" stroke-width="1.4"/></svg>
<div class="a" style="left:58px;top:512px;width:4px;height:5px;background:#aaa;"></div>
<svg class="a" style="left:0;top:0" width="920" height="518" viewBox="0 0 920 518">
<defs>
<pattern id="dots" width="2.2" height="2.2" patternUnits="userSpaceOnUse" patternTransform="rotate(-20)"><rect width="2.2" height="2.2" fill="#333"/><circle cx="1.1" cy="1.1" r="0.68" fill="#fff"/></pattern>
<pattern id="hatch" width="1.6" height="1.6" patternUnits="userSpaceOnUse" patternTransform="rotate(60)"><rect width="1.6" height="1.6" fill="#fff"/><rect width="1.05" height="1.6" fill="#161616"/></pattern>
<pattern id="plate" width="2.4" height="2.4" patternUnits="userSpaceOnUse" patternTransform="rotate(58)"><rect width="2.4" height="2.4" fill="#a0a0a0"/><path d="M0 1.2 L1.2 0 L2.4 1.2 L1.2 2.4Z" fill="none" stroke="#161616" stroke-width="0.62"/><circle cx="1.2" cy="1.2" r="0.35" fill="#fff"/></pattern>
<pattern id="hatch2" width="1.7" height="1.7" patternUnits="userSpaceOnUse" patternTransform="rotate(-25)"><rect width="1.7" height="1.7" fill="#f4f4f4"/><rect width="0.8" height="1.7" fill="#222"/></pattern>
<pattern id="grid" width="2.8" height="2.8" patternUnits="userSpaceOnUse" patternTransform="rotate(30)"><rect width="2.8" height="2.8" fill="#fff"/><path d="M0 0 H2.8 M0 0 V2.8" stroke="#1a1a1a" stroke-width="0.75"/></pattern>
<pattern id="speck" width="14" height="14" patternUnits="userSpaceOnUse" patternTransform="rotate(17)"><rect width="14" height="14" fill="#fff"/><circle cx="8.72" cy="10.39" r="0.6" fill="#111"/><circle cx="13.19" cy="10.36" r="0.5" fill="#111"/><circle cx="0.41" cy="6.52" r="0.3" fill="#111"/><circle cx="9.09" cy="12.61" r="0.25" fill="#111"/><circle cx="5.21" cy="12.16" r="0.4" fill="#111"/><circle cx="7.61" cy="8.04" r="0.25" fill="#111"/><circle cx="10.24" cy="5.71" r="0.3" fill="#111"/><circle cx="12.83" cy="10.72" r="0.3" fill="#111"/><circle cx="10.67" cy="1.01" r="0.5" fill="#111"/><circle cx="8.64" cy="1.77" r="0.25" fill="#111"/><circle cx="13.61" cy="0.07" r="0.3" fill="#111"/><circle cx="13.44" cy="2.32" r="0.3" fill="#111"/><circle cx="4.05" cy="13.46" r="0.5" fill="#111"/><circle cx="12.27" cy="8.76" r="0.3" fill="#111"/><circle cx="13.17" cy="9.67" r="0.4" fill="#111"/><circle cx="4.18" cy="5.06" r="0.3" fill="#111"/><circle cx="13.10" cy="3.69" r="0.35" fill="#111"/><circle cx="4.22" cy="8.44" r="0.25" fill="#111"/><circle cx="8.34" cy="9.91" r="0.25" fill="#111"/><circle cx="4.34" cy="11.46" r="0.4" fill="#111"/><circle cx="9.75" cy="2.59" r="0.4" fill="#111"/><circle cx="9.87" cy="0.80" r="0.25" fill="#111"/><circle cx="13.29" cy="5.01" r="0.4" fill="#111"/><circle cx="0.25" cy="11.03" r="0.35" fill="#111"/><circle cx="5.27" cy="11.78" r="0.4" fill="#111"/><circle cx="0.65" cy="2.53" r="0.3" fill="#111"/><circle cx="1.67" cy="3.45" r="0.4" fill="#111"/><circle cx="4.82" cy="4.97" r="0.5" fill="#111"/><circle cx="3.51" cy="6.48" r="0.5" fill="#111"/><circle cx="10.48" cy="11.16" r="0.35" fill="#111"/><circle cx="0.51" cy="13.24" r="0.25" fill="#111"/><circle cx="2.92" cy="7.18" r="0.35" fill="#111"/><circle cx="12.85" cy="4.76" r="0.6" fill="#111"/><circle cx="7.63" cy="4.37" r="0.35" fill="#111"/><circle cx="4.29" cy="11.18" r="0.6" fill="#111"/><circle cx="2.08" cy="9.65" r="0.4" fill="#111"/><circle cx="2.26" cy="0.68" r="0.5" fill="#111"/><circle cx="7.47" cy="5.68" r="0.3" fill="#111"/><circle cx="10.37" cy="4.81" r="0.35" fill="#111"/><circle cx="6.38" cy="5.90" r="0.25" fill="#111"/><circle cx="13.71" cy="8.94" r="0.4" fill="#111"/><circle cx="4.68" cy="2.90" r="0.6" fill="#111"/><circle cx="7.90" cy="1.86" r="0.4" fill="#111"/><circle cx="1.49" cy="6.08" r="0.3" fill="#111"/><circle cx="0.82" cy="5.89" r="0.3" fill="#111"/><circle cx="6.34" cy="13.99" r="0.3" fill="#111"/><circle cx="13.66" cy="6.35" r="0.4" fill="#111"/><circle cx="9.64" cy="4.45" r="0.35" fill="#111"/><circle cx="4.07" cy="5.65" r="0.3" fill="#111"/><circle cx="1.58" cy="11.51" r="0.5" fill="#111"/><circle cx="13.44" cy="8.78" r="0.4" fill="#111"/><circle cx="12.15" cy="2.52" r="0.4" fill="#111"/><circle cx="3.81" cy="10.95" r="0.5" fill="#111"/><circle cx="5.06" cy="11.00" r="0.35" fill="#111"/><circle cx="9.72" cy="9.30" r="0.35" fill="#111"/><circle cx="5.09" cy="9.86" r="0.35" fill="#111"/><circle cx="11.69" cy="3.71" r="0.6" fill="#111"/><circle cx="10.02" cy="13.40" r="0.35" fill="#111"/><circle cx="9.10" cy="8.13" r="0.25" fill="#111"/><circle cx="6.64" cy="10.83" r="0.35" fill="#111"/><circle cx="9.40" cy="6.48" r="0.5" fill="#111"/><circle cx="9.06" cy="11.17" r="0.35" fill="#111"/><circle cx="3.83" cy="4.84" r="0.4" fill="#111"/><circle cx="4.90" cy="11.80" r="0.6" fill="#111"/><circle cx="6.30" cy="5.10" r="0.35" fill="#111"/><circle cx="7.25" cy="7.41" r="0.3" fill="#111"/><circle cx="2.78" cy="5.07" r="0.4" fill="#111"/><circle cx="3.96" cy="1.10" r="0.6" fill="#111"/><circle cx="10.22" cy="2.41" r="0.5" fill="#111"/><circle cx="7.23" cy="13.11" r="0.35" fill="#111"/><circle cx="8.73" cy="10.85" r="0.6" fill="#111"/><circle cx="3.79" cy="13.94" r="0.3" fill="#111"/><circle cx="2.24" cy="6.17" r="0.6" fill="#111"/><circle cx="2.53" cy="10.63" r="0.3" fill="#111"/><circle cx="8.83" cy="0.59" r="0.4" fill="#111"/><circle cx="13.72" cy="2.32" r="0.3" fill="#111"/><circle cx="1.55" cy="13.55" r="0.4" fill="#111"/><circle cx="2.71" cy="0.50" r="0.4" fill="#111"/><circle cx="4.92" cy="9.28" r="0.25" fill="#111"/><circle cx="8.26" cy="3.33" r="0.35" fill="#111"/><circle cx="0.01" cy="5.68" r="0.35" fill="#111"/><circle cx="11.98" cy="12.13" r="0.6" fill="#111"/><circle cx="11.64" cy="5.23" r="0.25" fill="#111"/><circle cx="7.70" cy="4.22" r="0.35" fill="#111"/><circle cx="7.63" cy="4.75" r="0.5" fill="#111"/><circle cx="4.10" cy="4.92" r="0.3" fill="#111"/><circle cx="5.87" cy="11.38" r="0.6" fill="#111"/><circle cx="7.54" cy="6.54" r="0.3" fill="#111"/><circle cx="8.34" cy="7.89" r="0.3" fill="#111"/><circle cx="13.55" cy="8.52" r="0.35" fill="#111"/><circle cx="11.50" cy="9.26" r="0.4" fill="#111"/><circle cx="1.51" cy="7.92" r="0.5" fill="#111"/><circle cx="7.55" cy="4.56" r="0.5" fill="#111"/><circle cx="5.26" cy="6.04" r="0.3" fill="#111"/><circle cx="6.91" cy="6.71" r="0.6" fill="#111"/><circle cx="5.32" cy="13.46" r="0.3" fill="#111"/><circle cx="8.34" cy="3.64" r="0.35" fill="#111"/><circle cx="6.95" cy="5.82" r="0.35" fill="#111"/><circle cx="13.23" cy="4.30" r="0.35" fill="#111"/><circle cx="2.01" cy="0.33" r="0.6" fill="#111"/><circle cx="8.70" cy="6.21" r="0.35" fill="#111"/><circle cx="0.56" cy="1.91" r="0.4" fill="#111"/><circle cx="0.18" cy="7.46" r="0.35" fill="#111"/><circle cx="3.41" cy="6.64" r="0.25" fill="#111"/><circle cx="3.44" cy="3.75" r="0.3" fill="#111"/><circle cx="10.10" cy="4.00" r="0.4" fill="#111"/><circle cx="8.51" cy="6.64" r="0.6" fill="#111"/><circle cx="12.09" cy="12.33" r="0.25" fill="#111"/><circle cx="0.23" cy="1.76" r="0.35" fill="#111"/><circle cx="7.47" cy="4.71" r="0.35" fill="#111"/><circle cx="10.24" cy="0.37" r="0.35" fill="#111"/><circle cx="5.05" cy="10.43" r="0.5" fill="#111"/><circle cx="1.85" cy="0.04" r="0.5" fill="#111"/><circle cx="6.38" cy="12.83" r="0.6" fill="#111"/><circle cx="7.64" cy="0.20" r="0.4" fill="#111"/><circle cx="8.33" cy="9.65" r="0.6" fill="#111"/><circle cx="9.08" cy="12.02" r="0.4" fill="#111"/><circle cx="6.66" cy="9.55" r="0.6" fill="#111"/><circle cx="2.75" cy="4.15" r="0.25" fill="#111"/><circle cx="4.25" cy="0.05" r="0.4" fill="#111"/><circle cx="8.15" cy="9.08" r="0.4" fill="#111"/><circle cx="12.75" cy="2.00" r="0.4" fill="#111"/><circle cx="9.73" cy="12.44" r="0.35" fill="#111"/><circle cx="7.53" cy="5.96" r="0.5" fill="#111"/><circle cx="11.37" cy="0.96" r="0.3" fill="#111"/><circle cx="3.74" cy="1.19" r="0.25" fill="#111"/><circle cx="9.29" cy="0.36" r="0.6" fill="#111"/><circle cx="6.01" cy="0.96" r="0.4" fill="#111"/><circle cx="9.82" cy="0.68" r="0.25" fill="#111"/><circle cx="3.07" cy="9.04" r="0.25" fill="#111"/><circle cx="9.97" cy="1.88" r="0.35" fill="#111"/><circle cx="9.88" cy="6.13" r="0.3" fill="#111"/><circle cx="8.55" cy="5.80" r="0.3" fill="#111"/><circle cx="0.94" cy="2.98" r="0.5" fill="#111"/><circle cx="1.52" cy="5.31" r="0.25" fill="#111"/><circle cx="3.92" cy="8.00" r="0.25" fill="#111"/><circle cx="10.39" cy="12.30" r="0.3" fill="#111"/><circle cx="0.14" cy="1.28" r="0.6" fill="#111"/><circle cx="8.40" cy="6.85" r="0.6" fill="#111"/><circle cx="5.24" cy="0.78" r="0.6" fill="#111"/><circle cx="4.13" cy="7.96" r="0.6" fill="#111"/><circle cx="7.08" cy="12.75" r="0.5" fill="#111"/><circle cx="7.70" cy="3.09" r="0.25" fill="#111"/><circle cx="7.72" cy="3.56" r="0.35" fill="#111"/><circle cx="7.24" cy="1.87" r="0.3" fill="#111"/><circle cx="12.09" cy="6.35" r="0.4" fill="#111"/><circle cx="2.51" cy="9.99" r="0.6" fill="#111"/><circle cx="4.78" cy="8.03" r="0.25" fill="#111"/><circle cx="1.28" cy="1.75" r="0.5" fill="#111"/><circle cx="6.35" cy="5.46" r="0.4" fill="#111"/><path d="M6.7 4.5 q0.6 -0.8 1.0 0.2" stroke="#111" stroke-width="0.45" fill="none"/><path d="M0.8 2.1 q0.9 -0.8 1.7 -0.3" stroke="#111" stroke-width="0.45" fill="none"/><path d="M1.6 13.6 q0.3 -0.8 1.8 -0.4" stroke="#111" stroke-width="0.45" fill="none"/><path d="M8.7 5.0 q-0.5 -0.8 1.3 0.1" stroke="#111" stroke-width="0.45" fill="none"/><path d="M4.9 5.4 q-0.7 -0.8 1.8 0.1" stroke="#111" stroke-width="0.45" fill="none"/><path d="M11.3 6.1 q0.7 -0.8 1.5 0.1" stroke="#111" stroke-width="0.45" fill="none"/><path d="M8.0 10.4 q-0.2 -0.8 1.1 -0.5" stroke="#111" stroke-width="0.45" fill="none"/><path d="M2.8 0.6 q0.8 -0.8 1.5 0.3" stroke="#111" stroke-width="0.45" fill="none"/><path d="M0.0 6.6 q0.8 -0.8 1.6 -0.1" stroke="#111" stroke-width="0.45" fill="none"/><path d="M6.5 1.4 q-0.7 -0.8 1.2 -0.1" stroke="#111" stroke-width="0.45" fill="none"/><path d="M5.4 12.3 q-0.7 -0.8 1.3 -0.2" stroke="#111" stroke-width="0.45" fill="none"/><path d="M2.3 4.0 q-0.5 -0.8 1.5 -0.5" stroke="#111" stroke-width="0.45" fill="none"/><path d="M12.9 5.2 q0.9 -0.8 1.7 0.2" stroke="#111" stroke-width="0.45" fill="none"/><path d="M6.6 13.2 q-0.8 -0.8 1.7 -0.2" stroke="#111" stroke-width="0.45" fill="none"/><path d="M9.4 10.2 q-0.7 -0.8 1.2 -0.5" stroke="#111" stroke-width="0.45" fill="none"/><path d="M3.2 1.1 q-0.2 -0.8 2.0 -0.1" stroke="#111" stroke-width="0.45" fill="none"/><path d="M4.4 6.6 q-0.4 -0.8 1.7 0.2" stroke="#111" stroke-width="0.45" fill="none"/><path d="M2.3 3.4 q0.3 -0.8 1.9 0.1" stroke="#111" stroke-width="0.45" fill="none"/></pattern>
<radialGradient id="hatg" cx="0.62" cy="0.45" r="0.6"><stop offset="0" stop-color="#fff" stop-opacity="0"/><stop offset="0.7" stop-color="#000" stop-opacity="0.1"/><stop offset="1" stop-color="#000" stop-opacity="0.55"/></radialGradient>
</defs>
<g stroke="#d8d8d8" stroke-width="0.8" fill="none"><rect x="328" y="46.3" width="313.5" height="439"/><path d="M333.5 37 V497 M635.7 37 V497 M322 52.5 H647 M322 479.3 H647"/></g>
<path d="M608.5 89.5 H360.5 V441.5 H608.5" fill="none" stroke="#e0e0e0" stroke-width="0.8"/>
<g stroke="#b0b0b0" stroke-width="0.7" fill="none"><path d="M472.3 40.5 H496.5 M484.5 37 V46.5 M472 491.3 H496 M484.6 485.5 V497.5 M315.6 265.6 H327.7 M322.4 253.5 V277.6 M641.3 265.6 H653.5 M647.2 253.5 V277.6"/></g>
<g fill="none" stroke="#2a2a2a" stroke-width="0.5" stroke-linecap="round" stroke-linejoin="round">
<path d="M511.6 80.7 L515.0 80.1 L516.8 84.7 L517.4 94.0 L520.3 101.0 L519.7 104.4 L515.0 105.0 L512.2 101.0 L509.8 95.2 L509.3 87.0 L511.0 82.4 Z" stroke="#666"/>
<path d="M513 83 L514.5 92 L516 99 M512 93 C 514 97, 516 101, 519 102" stroke="#888"/>
<path d="M515.6 105 L507 126.5 M512.2 102.7 L504 112"/>
<path d="M535.3 86.5 L538.8 86.5 L539.4 91.7 L538.2 101.0 L537.7 109.0 L534.2 110.2 L530.1 106.8 L529.5 101.0 L532.4 92.9 Z" stroke="#777"/>
<path d="M536 89 L535 100 L533 106 M531 102 C 533 104, 536 106, 538 106" stroke="#999"/>
<path d="M533.6 110.2 L521.4 126.5 M530.1 107.3 L516.2 115.5" stroke="#444"/>
<path d="M556.5 86.8 C 559 85, 562 83.5, 565 82 L 567 80.6 C 569 80.2, 570 82, 569.6 84 C 569.8 86.5, 569.5 89, 567.8 91"/>
<path d="M566 82.5 l1 2 M568 83 l-0.5 2.5" stroke="#777"/>
<path d="M556.5 86.8 L530.7 126.5 M567.8 91 L545.2 129.3"/>
<path d="M574.7 112 C 578 110.5, 582 109.8, 585.5 109.3 L 587.5 108.8 C 589 109.5, 589 112, 588 114.5 C 587 117, 585 118.5, 583.4 119"/>
<path d="M586 110 l0.8 2 M584 110.5 l0.5 1.8" stroke="#777"/>
<path d="M574.7 112 L545.2 132.8 M583.4 119 L549.6 148.4"/>
<path d="M513.9 132 C 518 129, 523.2 127.6, 531 126.5 C 537 125.9, 542 127, 545.2 128.8 C 546.5 133, 545 140, 543 147 C 541 152, 539 156, 537.7 158"/>
<path d="M517.5 135 C 523 132.5, 533 131.5, 539.5 134 C 541.5 139, 540.5 148, 536 157 M530.4 139.7 C 528.5 146, 527.6 152, 527.6 158" stroke="#555"/>
</g>
<path d="M527 133 C 533 131, 538 133, 540 137 C 538 144, 535 150, 533 156 C 530 150, 529 142, 527 133 Z" fill="#444" opacity="0.35"/>
<path d="M520 140 C 518 146, 519 152, 521 158 M524 137 C 522 145, 523 151, 524 157" stroke="#bbb" stroke-width="0.5" fill="none"/>
<path d="M554.2 145.2 C 562 143, 570 141.6, 576.2 141.6 C 584 141.4, 590 142, 594.6 145.2 M586 146 L592 143" fill="none" stroke="#c8c8c8" stroke-width="0.6"/>
<g stroke-linecap="round"><path d="M498.6 347.4 L518.9 340.5" stroke="#cccccc" stroke-width="0.27" opacity="0.61"/><path d="M527.9 342.1 L575.0 326.1" stroke="#909090" stroke-width="0.26" opacity="0.83"/><path d="M511.0 336.9 L542.6 326.1" stroke="#cccccc" stroke-width="0.28" opacity="0.70"/><path d="M487.2 342.0 L525.3 329.1" stroke="#7a7a7a" stroke-width="0.39" opacity="0.53"/><path d="M506.8 337.0 L552.3 321.6" stroke="#a6a6a6" stroke-width="0.35" opacity="0.67"/><path d="M523.1 326.6 L559.4 314.3" stroke="#cccccc" stroke-width="0.45" opacity="0.79"/><path d="M482.4 323.6 L512.3 313.5" stroke="#cccccc" stroke-width="0.43" opacity="0.50"/><path d="M525.8 316.5 L563.6 303.7" stroke="#bababa" stroke-width="0.42" opacity="0.81"/><path d="M510.3 324.3 L542.8 313.2" stroke="#a6a6a6" stroke-width="0.31" opacity="0.70"/><path d="M482.3 358.2 L525.3 343.6" stroke="#7a7a7a" stroke-width="0.39" opacity="0.50"/><path d="M521.3 343.8 L548.6 334.6" stroke="#7a7a7a" stroke-width="0.28" opacity="0.78"/><path d="M509.2 315.9 L551.5 301.6" stroke="#909090" stroke-width="0.48" opacity="0.69"/><path d="M509.7 337.3 L545.5 325.1" stroke="#a6a6a6" stroke-width="0.34" opacity="0.69"/><path d="M501.6 333.2 L535.5 321.7" stroke="#bababa" stroke-width="0.27" opacity="0.64"/><path d="M472.6 341.7 L492.7 334.9" stroke="#a6a6a6" stroke-width="0.41" opacity="0.43"/><path d="M574.2 331.3 L600.0 322.5" stroke="#a6a6a6" stroke-width="0.43" opacity="1.00"/><path d="M562.2 294.9 L591.6 284.9" stroke="#cccccc" stroke-width="0.28" opacity="1.00"/><path d="M468.7 373.0 L511.2 358.5" stroke="#909090" stroke-width="0.43" opacity="0.40"/><path d="M507.0 346.9 L530.3 339.0" stroke="#bababa" stroke-width="0.39" opacity="0.67"/><path d="M561.8 305.9 L600.0 292.9" stroke="#cccccc" stroke-width="0.32" opacity="1.00"/><path d="M508.9 313.7 L557.6 297.1" stroke="#909090" stroke-width="0.27" opacity="0.69"/><path d="M479.1 364.7 L518.2 351.4" stroke="#7a7a7a" stroke-width="0.37" opacity="0.47"/><path d="M528.6 325.3 L560.0 314.6" stroke="#a6a6a6" stroke-width="0.40" opacity="0.83"/><path d="M498.0 337.0 L520.0 329.5" stroke="#cccccc" stroke-width="0.49" opacity="0.61"/><path d="M536.0 321.8 L581.9 306.2" stroke="#cccccc" stroke-width="0.35" opacity="0.88"/><path d="M507.1 317.2 L528.4 310.0" stroke="#bababa" stroke-width="0.27" opacity="0.68"/><path d="M469.6 347.5 L498.5 337.7" stroke="#7a7a7a" stroke-width="0.28" opacity="0.40"/><path d="M526.0 334.3 L561.2 322.3" stroke="#a6a6a6" stroke-width="0.40" opacity="0.81"/><path d="M469.9 348.9 L508.2 335.8" stroke="#a6a6a6" stroke-width="0.40" opacity="0.41"/><path d="M515.6 342.9 L537.3 335.5" stroke="#bababa" stroke-width="0.50" opacity="0.74"/><path d="M514.7 324.2 L535.9 317.0" stroke="#a6a6a6" stroke-width="0.44" opacity="0.73"/><path d="M516.1 330.2 L556.2 316.6" stroke="#cccccc" stroke-width="0.26" opacity="0.74"/><path d="M569.5 303.7 L600.0 293.3" stroke="#7a7a7a" stroke-width="0.44" opacity="1.00"/><path d="M495.7 335.2 L534.3 322.0" stroke="#7a7a7a" stroke-width="0.42" opacity="0.59"/><path d="M491.5 332.3 L534.2 317.8" stroke="#cccccc" stroke-width="0.39" opacity="0.56"/><path d="M518.8 335.0 L557.2 321.9" stroke="#cccccc" stroke-width="0.45" opacity="0.76"/><path d="M573.3 325.4 L600.0 316.3" stroke="#909090" stroke-width="0.30" opacity="1.00"/><path d="M517.7 308.8 L559.1 294.7" stroke="#7a7a7a" stroke-width="0.45" opacity="0.75"/><path d="M515.4 336.5 L544.4 326.6" stroke="#a6a6a6" stroke-width="0.49" opacity="0.74"/><path d="M503.2 351.9 L528.3 343.4" stroke="#909090" stroke-width="0.37" opacity="0.65"/><path d="M500.2 294.6 L537.7 281.9" stroke="#7a7a7a" stroke-width="0.37" opacity="0.63"/><path d="M535.8 327.3 L579.4 312.5" stroke="#7a7a7a" stroke-width="0.46" opacity="0.88"/><path d="M475.5 326.5 L499.9 318.2" stroke="#909090" stroke-width="0.36" opacity="0.45"/><path d="M533.9 337.8 L554.6 330.7" stroke="#bababa" stroke-width="0.37" opacity="0.87"/><path d="M546.0 326.5 L595.8 309.6" stroke="#7a7a7a" stroke-width="0.29" opacity="0.96"/><path d="M564.2 317.4 L600.0 305.3" stroke="#909090" stroke-width="0.40" opacity="1.00"/><path d="M529.3 292.6 L552.3 284.8" stroke="#cccccc" stroke-width="0.28" opacity="0.84"/><path d="M463.6 352.7 L512.7 336.1" stroke="#7a7a7a" stroke-width="0.38" opacity="0.36"/><path d="M567.5 286.2 L600.0 275.1" stroke="#909090" stroke-width="0.26" opacity="1.00"/><path d="M486.0 351.3 L520.1 339.7" stroke="#cccccc" stroke-width="0.33" opacity="0.52"/><path d="M523.5 329.6 L565.2 315.4" stroke="#bababa" stroke-width="0.42" opacity="0.79"/><path d="M554.1 312.4 L588.6 300.7" stroke="#cccccc" stroke-width="0.28" opacity="1.00"/><path d="M479.2 313.8 L522.0 299.2" stroke="#cccccc" stroke-width="0.25" opacity="0.47"/><path d="M552.3 315.4 L575.8 307.4" stroke="#bababa" stroke-width="0.40" opacity="1.00"/><path d="M475.6 363.0 L510.6 351.1" stroke="#bababa" stroke-width="0.45" opacity="0.45"/><path d="M474.0 351.9 L509.9 339.7" stroke="#909090" stroke-width="0.30" opacity="0.44"/><path d="M466.8 358.9 L485.7 352.5" stroke="#7a7a7a" stroke-width="0.36" opacity="0.38"/><path d="M531.2 333.3 L565.4 321.7" stroke="#cccccc" stroke-width="0.30" opacity="0.85"/><path d="M493.3 312.0 L527.6 300.3" stroke="#909090" stroke-width="0.42" opacity="0.58"/><path d="M561.0 313.0 L600.0 299.8" stroke="#a6a6a6" stroke-width="0.48" opacity="1.00"/><path d="M562.9 318.2 L594.2 307.5" stroke="#bababa" stroke-width="0.36" opacity="1.00"/><path d="M470.2 359.8 L495.9 351.1" stroke="#7a7a7a" stroke-width="0.30" opacity="0.41"/><path d="M496.2 353.8 L544.3 337.5" stroke="#a6a6a6" stroke-width="0.29" opacity="0.60"/><path d="M561.8 330.9 L600.0 317.9" stroke="#909090" stroke-width="0.44" opacity="1.00"/><path d="M472.6 350.6 L512.0 337.3" stroke="#909090" stroke-width="0.29" opacity="0.43"/><path d="M510.8 325.9 L545.3 314.2" stroke="#a6a6a6" stroke-width="0.36" opacity="0.70"/><path d="M502.3 345.5 L531.1 335.7" stroke="#bababa" stroke-width="0.36" opacity="0.64"/><path d="M464.0 354.6 L492.7 344.9" stroke="#cccccc" stroke-width="0.32" opacity="0.36"/><path d="M570.6 334.9 L595.9 326.3" stroke="#7a7a7a" stroke-width="0.27" opacity="1.00"/><path d="M492.7 358.0 L539.7 342.0" stroke="#909090" stroke-width="0.32" opacity="0.57"/><path d="M476.6 315.8 L520.8 300.8" stroke="#a6a6a6" stroke-width="0.35" opacity="0.46"/><path d="M522.6 341.8 L557.1 330.1" stroke="#bababa" stroke-width="0.43" opacity="0.79"/><path d="M472.1 364.6 L503.7 353.8" stroke="#7a7a7a" stroke-width="0.32" opacity="0.42"/><path d="M463.9 354.9 L484.7 347.8" stroke="#a6a6a6" stroke-width="0.27" opacity="0.36"/><path d="M558.8 340.6 L591.3 329.5" stroke="#a6a6a6" stroke-width="0.50" opacity="1.00"/><path d="M509.2 343.3 L556.5 327.2" stroke="#cccccc" stroke-width="0.28" opacity="0.69"/><path d="M521.5 328.2 L544.7 320.4" stroke="#7a7a7a" stroke-width="0.30" opacity="0.78"/><path d="M567.3 318.9 L600.0 307.8" stroke="#cccccc" stroke-width="0.44" opacity="1.00"/><path d="M494.8 328.1 L523.9 318.2" stroke="#7a7a7a" stroke-width="0.50" opacity="0.59"/><path d="M466.2 346.6 L484.8 340.3" stroke="#cccccc" stroke-width="0.39" opacity="0.38"/><path d="M483.4 308.4 L504.8 301.2" stroke="#bababa" stroke-width="0.41" opacity="0.50"/><path d="M523.7 332.2 L570.1 316.4" stroke="#cccccc" stroke-width="0.33" opacity="0.80"/><path d="M486.3 340.9 L532.5 325.2" stroke="#909090" stroke-width="0.35" opacity="0.53"/><path d="M501.3 343.9 L521.0 337.2" stroke="#909090" stroke-width="0.25" opacity="0.63"/><path d="M532.7 334.8 L552.4 328.1" stroke="#bababa" stroke-width="0.47" opacity="0.86"/><path d="M537.8 312.1 L564.8 302.9" stroke="#909090" stroke-width="0.42" opacity="0.90"/><path d="M467.1 350.6 L485.2 344.5" stroke="#a6a6a6" stroke-width="0.49" opacity="0.39"/><path d="M571.9 320.8 L600.0 311.3" stroke="#909090" stroke-width="0.26" opacity="1.00"/><path d="M561.7 315.9 L590.4 306.1" stroke="#7a7a7a" stroke-width="0.37" opacity="1.00"/><path d="M518.8 337.4 L543.2 329.1" stroke="#cccccc" stroke-width="0.44" opacity="0.76"/><path d="M472.3 347.7 L509.0 335.2" stroke="#bababa" stroke-width="0.26" opacity="0.42"/><path d="M496.4 329.2 L521.8 320.5" stroke="#cccccc" stroke-width="0.49" opacity="0.60"/><path d="M558.4 331.8 L600.0 317.7" stroke="#cccccc" stroke-width="0.35" opacity="1.00"/><path d="M498.9 360.0 L548.4 343.1" stroke="#909090" stroke-width="0.32" opacity="0.62"/><path d="M531.9 340.3 L572.8 326.4" stroke="#cccccc" stroke-width="0.41" opacity="0.85"/><path d="M544.9 340.4 L588.9 325.5" stroke="#909090" stroke-width="0.48" opacity="0.95"/><path d="M547.1 295.8 L565.6 289.5" stroke="#cccccc" stroke-width="0.45" opacity="0.96"/><path d="M542.4 310.0 L591.0 293.5" stroke="#909090" stroke-width="0.27" opacity="0.93"/><path d="M466.7 323.3 L496.8 313.1" stroke="#bababa" stroke-width="0.39" opacity="0.38"/><path d="M532.9 297.0 L571.0 284.0" stroke="#909090" stroke-width="0.37" opacity="0.86"/><path d="M462.4 354.7 L496.5 343.1" stroke="#cccccc" stroke-width="0.27" opacity="0.35"/><path d="M521.4 305.6 L563.3 291.3" stroke="#bababa" stroke-width="0.31" opacity="0.78"/><path d="M470.4 342.9 L495.0 334.6" stroke="#bababa" stroke-width="0.37" opacity="0.41"/><path d="M505.2 355.8 L538.6 344.5" stroke="#a6a6a6" stroke-width="0.44" opacity="0.66"/><path d="M531.7 320.8 L554.4 313.1" stroke="#a6a6a6" stroke-width="0.41" opacity="0.85"/><path d="M540.3 317.0 L578.2 304.1" stroke="#909090" stroke-width="0.25" opacity="0.92"/><path d="M468.9 343.2 L509.0 329.6" stroke="#bababa" stroke-width="0.32" opacity="0.40"/><path d="M520.4 348.9 L553.2 337.7" stroke="#bababa" stroke-width="0.44" opacity="0.77"/><path d="M574.2 298.3 L595.0 291.3" stroke="#bababa" stroke-width="0.25" opacity="1.00"/><path d="M513.9 326.7 L558.1 311.7" stroke="#bababa" stroke-width="0.50" opacity="0.72"/><path d="M505.7 361.1 L526.1 354.2" stroke="#7a7a7a" stroke-width="0.29" opacity="0.67"/><path d="M521.2 311.7 L569.7 295.2" stroke="#909090" stroke-width="0.40" opacity="0.78"/><path d="M533.4 322.5 L563.1 312.4" stroke="#bababa" stroke-width="0.47" opacity="0.87"/><path d="M516.9 336.1 L535.7 329.7" stroke="#7a7a7a" stroke-width="0.49" opacity="0.75"/><path d="M539.0 303.1 L570.3 292.5" stroke="#bababa" stroke-width="0.33" opacity="0.91"/><path d="M556.9 328.4 L575.0 322.2" stroke="#a6a6a6" stroke-width="0.46" opacity="1.00"/><path d="M475.6 363.2 L522.4 347.3" stroke="#a6a6a6" stroke-width="0.31" opacity="0.45"/><path d="M469.3 335.6 L499.8 325.3" stroke="#cccccc" stroke-width="0.27" opacity="0.40"/><path d="M566.6 313.4 L593.6 304.2" stroke="#7a7a7a" stroke-width="0.46" opacity="1.00"/><path d="M494.3 309.6 L542.2 293.3" stroke="#909090" stroke-width="0.49" opacity="0.58"/><path d="M511.3 321.6 L554.4 306.9" stroke="#bababa" stroke-width="0.47" opacity="0.71"/><path d="M553.8 338.9 L591.9 325.9" stroke="#cccccc" stroke-width="0.39" opacity="1.00"/><path d="M543.3 342.0 L575.7 331.0" stroke="#909090" stroke-width="0.41" opacity="0.94"/><path d="M494.3 344.0 L513.9 337.3" stroke="#cccccc" stroke-width="0.28" opacity="0.58"/><path d="M515.4 323.3 L557.0 309.2" stroke="#a6a6a6" stroke-width="0.35" opacity="0.74"/><path d="M489.0 348.6 L522.4 337.2" stroke="#bababa" stroke-width="0.28" opacity="0.54"/><path d="M534.7 338.0 L578.7 323.0" stroke="#cccccc" stroke-width="0.31" opacity="0.87"/><path d="M564.4 320.7 L600.0 308.6" stroke="#bababa" stroke-width="0.36" opacity="1.00"/><path d="M523.9 327.3 L559.7 315.1" stroke="#a6a6a6" stroke-width="0.31" opacity="0.80"/><path d="M491.2 346.7 L527.4 334.4" stroke="#7a7a7a" stroke-width="0.44" opacity="0.56"/><path d="M508.6 317.5 L538.7 307.3" stroke="#a6a6a6" stroke-width="0.44" opacity="0.69"/><path d="M518.3 337.6 L554.7 325.3" stroke="#a6a6a6" stroke-width="0.28" opacity="0.76"/><path d="M518.9 309.5 L543.8 301.0" stroke="#a6a6a6" stroke-width="0.47" opacity="0.76"/><path d="M505.5 312.9 L544.1 299.8" stroke="#bababa" stroke-width="0.49" opacity="0.66"/><path d="M557.9 317.4 L576.9 311.0" stroke="#bababa" stroke-width="0.49" opacity="1.00"/><path d="M517.4 327.1 L537.7 320.2" stroke="#cccccc" stroke-width="0.46" opacity="0.75"/><path d="M571.9 310.7 L594.8 302.9" stroke="#cccccc" stroke-width="0.49" opacity="1.00"/><path d="M474.3 350.5 L518.7 335.4" stroke="#bababa" stroke-width="0.27" opacity="0.44"/><path d="M549.8 325.4 L586.0 313.1" stroke="#7a7a7a" stroke-width="0.41" opacity="0.98"/><path d="M496.3 336.4 L518.4 328.9" stroke="#a6a6a6" stroke-width="0.38" opacity="0.60"/><path d="M511.4 331.8 L539.0 322.4" stroke="#cccccc" stroke-width="0.30" opacity="0.71"/><path d="M491.5 331.6 L534.8 316.9" stroke="#7a7a7a" stroke-width="0.25" opacity="0.56"/><path d="M496.1 302.1 L534.7 289.0" stroke="#909090" stroke-width="0.37" opacity="0.60"/><path d="M488.5 347.6 L514.4 338.8" stroke="#bababa" stroke-width="0.43" opacity="0.54"/><path d="M496.7 352.5 L536.3 339.0" stroke="#bababa" stroke-width="0.27" opacity="0.60"/><path d="M487.7 341.5 L519.3 330.8" stroke="#a6a6a6" stroke-width="0.31" opacity="0.54"/><path d="M465.9 339.0 L505.7 325.5" stroke="#909090" stroke-width="0.25" opacity="0.38"/><path d="M495.0 349.2 L540.1 333.9" stroke="#7a7a7a" stroke-width="0.30" opacity="0.59"/><path d="M571.6 300.9 L597.0 292.3" stroke="#909090" stroke-width="0.32" opacity="1.00"/><path d="M562.5 337.8 L584.0 330.5" stroke="#cccccc" stroke-width="0.37" opacity="1.00"/><path d="M483.2 343.2 L522.5 329.9" stroke="#cccccc" stroke-width="0.29" opacity="0.50"/><path d="M506.5 347.2 L531.3 338.8" stroke="#cccccc" stroke-width="0.29" opacity="0.67"/><path d="M467.9 359.0 L514.6 343.1" stroke="#a6a6a6" stroke-width="0.43" opacity="0.39"/><path d="M574.7 314.8 L600.0 306.2" stroke="#a6a6a6" stroke-width="0.30" opacity="1.00"/><path d="M535.7 307.4 L563.7 297.9" stroke="#bababa" stroke-width="0.46" opacity="0.88"/><path d="M573.3 307.7 L600.0 298.6" stroke="#7a7a7a" stroke-width="0.25" opacity="1.00"/><path d="M493.6 316.5 L515.6 309.0" stroke="#909090" stroke-width="0.35" opacity="0.58"/><path d="M548.9 346.5 L576.7 337.1" stroke="#bababa" stroke-width="0.27" opacity="0.98"/><path d="M541.7 326.8 L574.0 315.8" stroke="#a6a6a6" stroke-width="0.34" opacity="0.93"/><path d="M563.4 330.0 L582.3 323.6" stroke="#bababa" stroke-width="0.31" opacity="1.00"/><path d="M532.7 312.7 L565.5 301.6" stroke="#7a7a7a" stroke-width="0.31" opacity="0.86"/><path d="M546.4 326.9 L593.2 311.0" stroke="#a6a6a6" stroke-width="0.34" opacity="0.96"/><path d="M499.9 339.1 L541.7 324.9" stroke="#a6a6a6" stroke-width="0.48" opacity="0.62"/><path d="M495.6 335.4 L536.7 321.4" stroke="#cccccc" stroke-width="0.48" opacity="0.59"/><path d="M533.6 326.5 L559.1 317.9" stroke="#bababa" stroke-width="0.43" opacity="0.87"/><path d="M514.6 329.0 L557.5 314.5" stroke="#a6a6a6" stroke-width="0.48" opacity="0.73"/><path d="M554.1 327.7 L572.4 321.5" stroke="#a6a6a6" stroke-width="0.46" opacity="1.00"/><path d="M549.3 330.5 L586.8 317.7" stroke="#a6a6a6" stroke-width="0.47" opacity="0.98"/><path d="M514.1 334.3 L548.4 322.6" stroke="#bababa" stroke-width="0.44" opacity="0.73"/><path d="M489.9 320.1 L510.0 313.3" stroke="#7a7a7a" stroke-width="0.37" opacity="0.55"/><path d="M523.5 334.9 L544.9 327.7" stroke="#7a7a7a" stroke-width="0.32" opacity="0.79"/><path d="M471.5 357.3 L492.6 350.1" stroke="#bababa" stroke-width="0.50" opacity="0.42"/><path d="M571.8 314.1 L600.0 304.6" stroke="#909090" stroke-width="0.44" opacity="1.00"/><path d="M557.7 322.1 L597.0 308.7" stroke="#7a7a7a" stroke-width="0.44" opacity="1.00"/><path d="M495.2 334.7 L521.3 325.8" stroke="#a6a6a6" stroke-width="0.30" opacity="0.59"/><path d="M490.0 349.4 L515.8 340.6" stroke="#909090" stroke-width="0.32" opacity="0.55"/><path d="M564.6 315.1 L590.6 306.2" stroke="#909090" stroke-width="0.38" opacity="1.00"/><path d="M488.1 343.9 L532.0 328.9" stroke="#bababa" stroke-width="0.50" opacity="0.54"/><path d="M473.6 318.5 L518.5 303.2" stroke="#a6a6a6" stroke-width="0.26" opacity="0.43"/><path d="M495.2 340.8 L517.0 333.4" stroke="#909090" stroke-width="0.40" opacity="0.59"/><path d="M555.6 318.1 L590.0 306.4" stroke="#909090" stroke-width="0.36" opacity="1.00"/><path d="M491.4 343.2 L534.3 328.6" stroke="#7a7a7a" stroke-width="0.28" opacity="0.56"/><path d="M529.4 317.9 L559.2 307.8" stroke="#909090" stroke-width="0.26" opacity="0.84"/><path d="M575.0 302.9 L594.2 296.3" stroke="#909090" stroke-width="0.45" opacity="1.00"/><path d="M554.5 305.2 L592.4 292.3" stroke="#7a7a7a" stroke-width="0.30" opacity="1.00"/><path d="M551.9 324.8 L587.4 312.7" stroke="#7a7a7a" stroke-width="0.35" opacity="1.00"/><path d="M551.9 313.3 L587.0 301.3" stroke="#909090" stroke-width="0.35" opacity="1.00"/><path d="M492.6 330.6 L542.3 313.8" stroke="#a6a6a6" stroke-width="0.35" opacity="0.57"/><path d="M467.8 345.2 L499.1 334.6" stroke="#7a7a7a" stroke-width="0.47" opacity="0.39"/><path d="M574.6 280.7 L600.0 272.1" stroke="#909090" stroke-width="0.35" opacity="1.00"/><path d="M521.2 412.3 L539.0 405.7" stroke="#555" stroke-width="0.50" opacity="0.76"/><path d="M547.2 397.7 L572.3 388.4" stroke="#6a6a6a" stroke-width="0.29" opacity="0.62"/><path d="M500.0 416.5 L527.7 406.3" stroke="#7e7e7e" stroke-width="0.47" opacity="0.67"/><path d="M517.6 405.5 L535.5 398.9" stroke="#6a6a6a" stroke-width="0.53" opacity="0.64"/><path d="M526.0 410.1 L544.8 403.2" stroke="#6a6a6a" stroke-width="0.50" opacity="0.62"/><path d="M550.8 394.0 L572.4 386.0" stroke="#aaaaaa" stroke-width="0.53" opacity="0.76"/><path d="M552.1 394.7 L570.0 388.1" stroke="#6a6a6a" stroke-width="0.44" opacity="0.85"/><path d="M504.5 410.9 L529.8 401.5" stroke="#aaaaaa" stroke-width="0.32" opacity="0.76"/><path d="M527.1 404.1 L547.1 396.7" stroke="#6a6a6a" stroke-width="0.26" opacity="0.82"/><path d="M544.5 400.4 L559.4 394.9" stroke="#7e7e7e" stroke-width="0.29" opacity="0.84"/><path d="M527.1 403.2 L551.1 394.2" stroke="#aaaaaa" stroke-width="0.32" opacity="0.76"/><path d="M514.7 407.9 L540.8 398.2" stroke="#6a6a6a" stroke-width="0.26" opacity="0.85"/><path d="M519.0 409.5 L551.7 397.4" stroke="#949494" stroke-width="0.50" opacity="0.92"/><path d="M522.0 414.9 L537.6 409.1" stroke="#7e7e7e" stroke-width="0.38" opacity="0.64"/><path d="M517.8 408.0 L547.0 397.1" stroke="#555" stroke-width="0.53" opacity="0.73"/><path d="M541.7 400.3 L557.6 394.4" stroke="#aaaaaa" stroke-width="0.52" opacity="0.86"/><path d="M539.3 402.3 L568.0 391.7" stroke="#555" stroke-width="0.31" opacity="0.99"/><path d="M517.0 409.8 L554.0 396.1" stroke="#6a6a6a" stroke-width="0.46" opacity="0.89"/><path d="M508.7 414.6 L528.7 407.2" stroke="#7e7e7e" stroke-width="0.52" opacity="0.71"/><path d="M546.8 395.5 L564.3 389.1" stroke="#aaaaaa" stroke-width="0.54" opacity="0.79"/><path d="M530.2 402.3 L553.2 393.8" stroke="#6a6a6a" stroke-width="0.30" opacity="0.66"/><path d="M547.9 397.6 L578.2 386.4" stroke="#949494" stroke-width="0.30" opacity="0.91"/><path d="M500.8 413.3 L523.5 404.9" stroke="#949494" stroke-width="0.42" opacity="0.83"/><path d="M551.5 396.3 L568.0 390.2" stroke="#aaaaaa" stroke-width="0.44" opacity="0.76"/><path d="M540.5 400.1 L568.4 389.7" stroke="#7e7e7e" stroke-width="0.35" opacity="0.63"/><path d="M504.9 423.1 L533.6 412.4" stroke="#555" stroke-width="0.34" opacity="0.81"/><path d="M506.1 420.9 L542.4 407.5" stroke="#7e7e7e" stroke-width="0.47" opacity="0.90"/><path d="M508.2 411.5 L529.2 403.8" stroke="#949494" stroke-width="0.38" opacity="0.75"/><path d="M500.4 414.8 L515.5 409.2" stroke="#555" stroke-width="0.25" opacity="0.74"/><path d="M500.3 415.9 L522.9 407.5" stroke="#6a6a6a" stroke-width="0.37" opacity="0.72"/><path d="M504.4 411.9 L522.2 405.3" stroke="#555" stroke-width="0.53" opacity="0.70"/><path d="M506.1 416.4 L522.4 410.4" stroke="#6a6a6a" stroke-width="0.51" opacity="0.91"/><path d="M515.2 410.2 L544.7 399.2" stroke="#aaaaaa" stroke-width="0.52" opacity="0.84"/><path d="M526.6 406.6 L555.1 396.1" stroke="#aaaaaa" stroke-width="0.47" opacity="0.70"/><path d="M549.1 399.2 L572.9 390.4" stroke="#6a6a6a" stroke-width="0.30" opacity="0.96"/><path d="M497.2 417.4 L525.9 406.8" stroke="#6a6a6a" stroke-width="0.29" opacity="0.68"/><path d="M525.9 400.1 L559.5 387.7" stroke="#6a6a6a" stroke-width="0.40" opacity="0.63"/><path d="M524.9 406.3 L562.7 392.3" stroke="#949494" stroke-width="0.46" opacity="0.60"/><path d="M541.5 400.4 L573.3 388.6" stroke="#949494" stroke-width="0.30" opacity="1.00"/><path d="M506.5 409.8 L535.9 398.9" stroke="#555" stroke-width="0.35" opacity="0.90"/><path d="M537.9 405.1 L558.3 397.5" stroke="#aaaaaa" stroke-width="0.45" opacity="0.87"/><path d="M543.2 398.3 L580.5 384.5" stroke="#7e7e7e" stroke-width="0.44" opacity="0.99"/><path d="M508.3 413.1 L528.6 405.6" stroke="#6a6a6a" stroke-width="0.50" opacity="0.68"/><path d="M496.9 416.7 L532.8 403.4" stroke="#6a6a6a" stroke-width="0.51" opacity="0.73"/><path d="M504.5 417.8 L535.1 406.5" stroke="#aaaaaa" stroke-width="0.39" opacity="0.94"/><path d="M531.0 401.5 L565.5 388.7" stroke="#949494" stroke-width="0.54" opacity="0.69"/><path d="M545.8 399.2 L573.9 388.8" stroke="#aaaaaa" stroke-width="0.52" opacity="0.66"/><path d="M498.4 416.0 L514.9 409.9" stroke="#6a6a6a" stroke-width="0.35" opacity="0.66"/><path d="M492.2 419.4 L521.4 408.6" stroke="#555" stroke-width="0.47" opacity="0.63"/><path d="M530.2 406.3 L553.0 397.9" stroke="#aaaaaa" stroke-width="0.52" opacity="0.63"/><path d="M550.5 400.9 L567.1 394.7" stroke="#6a6a6a" stroke-width="0.31" opacity="0.61"/><path d="M545.9 397.9 L581.8 384.7" stroke="#555" stroke-width="0.50" opacity="0.85"/><path d="M506.7 414.6 L538.9 402.7" stroke="#6a6a6a" stroke-width="0.34" opacity="0.73"/><path d="M510.0 413.0 L532.4 404.7" stroke="#7e7e7e" stroke-width="0.26" opacity="0.90"/><path d="M548.7 398.0 L574.2 388.6" stroke="#7e7e7e" stroke-width="0.44" opacity="0.61"/><path d="M518.4 403.2 L542.8 394.1" stroke="#555" stroke-width="0.35" opacity="0.88"/><path d="M530.3 406.5 L546.4 400.5" stroke="#7e7e7e" stroke-width="0.30" opacity="0.60"/><path d="M501.4 420.5 L533.7 408.6" stroke="#555" stroke-width="0.25" opacity="0.80"/><path d="M522.5 408.3 L548.4 398.7" stroke="#7e7e7e" stroke-width="0.54" opacity="0.81"/><path d="M531.9 401.3 L549.7 394.7" stroke="#6a6a6a" stroke-width="0.53" opacity="0.69"/><path d="M502.4 418.5 L528.2 409.0" stroke="#aaaaaa" stroke-width="0.49" opacity="0.85"/><path d="M515.2 407.6 L538.9 398.9" stroke="#949494" stroke-width="0.52" opacity="0.90"/><path d="M520.5 405.7 L541.8 397.8" stroke="#949494" stroke-width="0.52" opacity="0.80"/><path d="M510.9 408.6 L546.1 395.6" stroke="#6a6a6a" stroke-width="0.53" opacity="0.65"/><path d="M534.4 400.9 L549.2 395.4" stroke="#aaaaaa" stroke-width="0.35" opacity="0.66"/><path d="M542.3 397.4 L572.2 386.4" stroke="#7e7e7e" stroke-width="0.30" opacity="0.78"/><path d="M540.4 399.5 L565.5 390.2" stroke="#6a6a6a" stroke-width="0.40" opacity="0.71"/><path d="M534.9 402.1 L568.7 389.6" stroke="#aaaaaa" stroke-width="0.30" opacity="0.66"/><path d="M511.4 409.8 L529.3 403.2" stroke="#7e7e7e" stroke-width="0.54" opacity="0.70"/><path d="M545.3 399.7 L583.1 385.7" stroke="#6a6a6a" stroke-width="0.54" opacity="0.64"/><path d="M513.0 418.5 L544.6 406.8" stroke="#949494" stroke-width="0.33" opacity="0.64"/><path d="M551.1 396.7 L571.9 389.0" stroke="#949494" stroke-width="0.39" opacity="0.61"/><path d="M539.2 400.0 L576.7 386.1" stroke="#7e7e7e" stroke-width="0.39" opacity="0.66"/><path d="M530.6 405.7 L554.3 396.9" stroke="#6a6a6a" stroke-width="0.52" opacity="0.77"/><path d="M530.8 404.4 L550.3 397.2" stroke="#aaaaaa" stroke-width="0.51" opacity="0.87"/><path d="M532.3 399.6 L557.2 390.4" stroke="#7e7e7e" stroke-width="0.33" opacity="0.88"/><path d="M544.9 399.2 L576.0 387.7" stroke="#6a6a6a" stroke-width="0.33" opacity="0.77"/><path d="M518.8 413.4 L547.7 402.7" stroke="#949494" stroke-width="0.41" opacity="0.86"/><path d="M552.0 397.8 L566.3 392.5" stroke="#949494" stroke-width="0.52" opacity="0.64"/><path d="M511.0 410.0 L530.2 402.9" stroke="#6a6a6a" stroke-width="0.41" opacity="0.64"/></g>
<g stroke-linecap="round"><path d="M508.1 381.4 L531.7 366.0" stroke="#111" stroke-width="0.56" opacity="0.87"/><path d="M505.8 383.5 L530.1 367.7" stroke="#111" stroke-width="0.68" opacity="0.59"/><path d="M508.7 381.8 L525.5 370.9" stroke="#111" stroke-width="0.69" opacity="0.66"/><path d="M500.2 386.8 L527.9 368.7" stroke="#111" stroke-width="0.46" opacity="0.51"/><path d="M507.9 381.8 L529.1 367.9" stroke="#111" stroke-width="0.41" opacity="0.60"/><path d="M508.4 383.0 L538.5 363.4" stroke="#111" stroke-width="0.51" opacity="0.60"/><path d="M502.0 386.9 L525.6 371.6" stroke="#111" stroke-width="0.61" opacity="0.86"/><path d="M507.1 382.2 L531.0 366.7" stroke="#111" stroke-width="0.52" opacity="0.60"/><path d="M507.2 384.2 L536.6 365.1" stroke="#111" stroke-width="0.63" opacity="0.71"/><path d="M503.0 385.7 L532.3 366.7" stroke="#111" stroke-width="0.35" opacity="0.88"/><path d="M502.7 384.8 L529.5 367.4" stroke="#111" stroke-width="0.40" opacity="0.69"/><path d="M501.7 388.4 L523.5 374.3" stroke="#111" stroke-width="0.59" opacity="0.63"/><path d="M505.3 384.5 L530.4 368.2" stroke="#111" stroke-width="0.55" opacity="0.80"/><path d="M503.8 386.3 L538.4 363.9" stroke="#111" stroke-width="0.64" opacity="0.53"/><path d="M508.9 383.2 L525.7 372.3" stroke="#111" stroke-width="0.63" opacity="0.78"/><path d="M499.7 386.0 L523.7 370.4" stroke="#111" stroke-width="0.68" opacity="0.80"/><path d="M501.2 387.1 L527.2 370.2" stroke="#111" stroke-width="0.61" opacity="0.66"/><path d="M501.3 387.5 L538.0 363.7" stroke="#111" stroke-width="0.62" opacity="0.58"/><path d="M508.9 383.3 L534.2 366.8" stroke="#111" stroke-width="0.66" opacity="0.85"/><path d="M509.6 380.7 L526.7 369.6" stroke="#111" stroke-width="0.58" opacity="0.74"/><path d="M510.1 381.3 L532.4 366.8" stroke="#111" stroke-width="0.41" opacity="0.61"/><path d="M501.2 385.9 L531.4 366.3" stroke="#111" stroke-width="0.32" opacity="0.71"/><path d="M505.5 385.1 L532.1 367.8" stroke="#111" stroke-width="0.65" opacity="0.50"/><path d="M509.6 382.6 L531.0 368.7" stroke="#111" stroke-width="0.53" opacity="0.80"/><path d="M504.5 385.5 L538.9 363.2" stroke="#111" stroke-width="0.33" opacity="0.79"/><path d="M507.1 382.3 L524.0 371.4" stroke="#111" stroke-width="0.54" opacity="0.81"/><path d="M571.1 376.7 L578.3 370.6" stroke="#111" stroke-width="0.54" opacity="0.90"/><path d="M567.1 379.0 L579.4 368.5" stroke="#111" stroke-width="0.61" opacity="0.65"/><path d="M569.0 378.3 L578.3 370.3" stroke="#111" stroke-width="0.69" opacity="0.59"/><path d="M568.8 377.3 L577.8 369.6" stroke="#111" stroke-width="0.58" opacity="0.87"/><path d="M568.7 377.6 L578.2 369.4" stroke="#111" stroke-width="0.44" opacity="0.73"/><path d="M571.1 377.6 L579.1 370.8" stroke="#111" stroke-width="0.70" opacity="0.65"/><path d="M569.5 377.1 L579.0 368.9" stroke="#111" stroke-width="0.69" opacity="0.52"/><path d="M570.0 377.6 L580.4 368.7" stroke="#111" stroke-width="0.57" opacity="0.52"/><path d="M567.8 378.8 L580.6 367.8" stroke="#111" stroke-width="0.60" opacity="0.80"/><path d="M570.3 376.8 L580.5 368.0" stroke="#111" stroke-width="0.61" opacity="0.78"/><path d="M569.5 376.4 L579.2 368.1" stroke="#111" stroke-width="0.41" opacity="0.80"/><path d="M568.9 376.9 L579.7 367.6" stroke="#111" stroke-width="0.35" opacity="0.58"/></g>
<g fill="#222"><circle cx="536" cy="382" r="0.6"/><circle cx="511" cy="391" r="0.5"/><circle cx="518" cy="390" r="0.4"/><circle cx="498" cy="421" r="0.5"/><circle cx="530" cy="348" r="0.4"/></g>
<path d="M425 384 C 440 380.5, 460 374, 486 366.8 L 499.5 360.6 L 486 367.8 C 462 375, 446 382, 428 388 Z" fill="#111"/>
<path d="M425.0 385.5 Q435.8 383.8 446.0 380.0 Q435.2 381.7 425.0 385.5Z" fill="#111" opacity="0.90"/>
<path d="M423 387.5 l7 -4.5 l1.5 3.5 z" fill="#111"/>
<g fill="#222"><circle cx="470" cy="373" r="0.5"/><circle cx="476" cy="369.5" r="0.6"/><circle cx="491" cy="366" r="0.4"/><circle cx="466" cy="376" r="0.4"/></g>
<defs><linearGradient id="vfade" x1="0" y1="0" x2="0" y2="1"><stop offset="0" stop-color="#000"/><stop offset="0.35" stop-color="#fff"/><stop offset="1" stop-color="#fff"/></linearGradient><mask id="vmask" maskUnits="userSpaceOnUse" x="440" y="395" width="60" height="80"><rect x="440" y="395" width="60" height="80" fill="url(#vfade)"/></mask></defs>
<g mask="url(#vmask)"><path d="M452.4 422.8 L452.3 466.9" stroke="#777" stroke-width="0.42"/><path d="M456.1 407.9 L456.7 464.2" stroke="#555" stroke-width="0.31"/><path d="M462.8 411.8 L463.6 463.3" stroke="#333" stroke-width="0.32"/><path d="M470.3 424.4 L469.6 465.1" stroke="#999" stroke-width="0.31"/><path d="M451.5 410.4 L452.3 462.7" stroke="#555" stroke-width="0.32"/><path d="M466.3 401.3 L464.9 463.4" stroke="#555" stroke-width="0.36"/><path d="M466.8 398.3 L467.8 463.7" stroke="#333" stroke-width="0.25"/><path d="M455.5 413.1 L455.2 458.6" stroke="#999" stroke-width="0.38"/><path d="M457.9 399.6 L458.1 465.1" stroke="#555" stroke-width="0.38"/><path d="M454.1 418.1 L453.5 464.2" stroke="#777" stroke-width="0.43"/><path d="M452.9 399.0 L453.6 455.8" stroke="#bbb" stroke-width="0.22"/><path d="M462.5 421.3 L463.1 457.2" stroke="#999" stroke-width="0.35"/><path d="M462.7 428.4 L462.1 464.5" stroke="#555" stroke-width="0.24"/><path d="M480.5 409.6 L480.4 463.4" stroke="#999" stroke-width="0.32"/><path d="M479.8 412.5 L480.1 458.5" stroke="#777" stroke-width="0.27"/><path d="M453.2 429.2 L453.7 464.1" stroke="#777" stroke-width="0.42"/><path d="M477.9 398.5 L478.3 457.0" stroke="#bbb" stroke-width="0.31"/><path d="M483.9 410.1 L483.7 463.9" stroke="#555" stroke-width="0.40"/><path d="M461.5 398.1 L460.7 458.4" stroke="#bbb" stroke-width="0.43"/><path d="M479.2 423.1 L477.7 458.8" stroke="#bbb" stroke-width="0.24"/><path d="M487.1 423.5 L487.4 462.1" stroke="#999" stroke-width="0.29"/><path d="M454.1 415.7 L452.7 465.4" stroke="#555" stroke-width="0.28"/><path d="M453.1 410.7 L453.9 464.2" stroke="#bbb" stroke-width="0.39"/><path d="M480.3 412.7 L480.7 456.1" stroke="#333" stroke-width="0.26"/><path d="M472.4 426.7 L472.0 466.5" stroke="#999" stroke-width="0.33"/><path d="M458.5 404.8 L458.9 456.2" stroke="#777" stroke-width="0.29"/><path d="M471.9 410.9 L470.3 461.7" stroke="#333" stroke-width="0.43"/><path d="M469.3 425.7 L468.6 459.8" stroke="#333" stroke-width="0.24"/><path d="M473.1 409.0 L471.2 461.8" stroke="#333" stroke-width="0.25"/><path d="M483.2 416.1 L481.9 462.6" stroke="#777" stroke-width="0.31"/><path d="M486.0 422.6 L486.9 465.6" stroke="#777" stroke-width="0.41"/><path d="M463.5 429.8 L461.6 459.9" stroke="#333" stroke-width="0.34"/><path d="M483.2 412.7 L483.9 467.3" stroke="#333" stroke-width="0.42"/><path d="M474.7 427.5 L472.9 464.2" stroke="#777" stroke-width="0.34"/><path d="M474.7 428.6 L473.9 463.7" stroke="#999" stroke-width="0.41"/><path d="M464.7 405.5 L463.2 464.4" stroke="#777" stroke-width="0.44"/><path d="M453.2 415.7 L454.0 455.4" stroke="#777" stroke-width="0.40"/><path d="M477.3 418.7 L475.4 467.8" stroke="#555" stroke-width="0.28"/></g>
<g><path d="M478.1 409.0 L499.4 400.5" stroke="#666" stroke-width="0.35" opacity="0.62"/><path d="M492.4 414.4 L507.9 408.2" stroke="#666" stroke-width="0.30" opacity="0.59"/><path d="M486.4 413.8 L508.5 405.0" stroke="#666" stroke-width="0.43" opacity="0.85"/><path d="M488.3 423.3 L510.3 414.5" stroke="#666" stroke-width="0.24" opacity="0.82"/><path d="M479.7 417.4 L495.3 411.1" stroke="#666" stroke-width="0.39" opacity="0.79"/><path d="M499.1 423.5 L514.9 417.2" stroke="#666" stroke-width="0.21" opacity="0.44"/><path d="M499.4 411.5 L512.9 406.0" stroke="#666" stroke-width="0.23" opacity="0.58"/><path d="M485.3 419.7 L498.0 414.6" stroke="#666" stroke-width="0.31" opacity="0.84"/><path d="M487.7 408.0 L503.9 401.5" stroke="#666" stroke-width="0.26" opacity="0.41"/><path d="M490.6 410.9 L512.6 402.1" stroke="#666" stroke-width="0.27" opacity="0.45"/><path d="M488.0 414.6 L500.3 409.7" stroke="#666" stroke-width="0.33" opacity="0.72"/><path d="M495.3 423.5 L513.7 416.1" stroke="#666" stroke-width="0.41" opacity="0.46"/><path d="M494.6 424.4 L511.1 417.8" stroke="#666" stroke-width="0.27" opacity="0.52"/><path d="M483.2 412.8 L499.5 406.3" stroke="#666" stroke-width="0.24" opacity="0.82"/><path d="M499.5 407.9 L519.1 400.0" stroke="#666" stroke-width="0.31" opacity="0.65"/><path d="M489.2 413.9 L511.1 405.1" stroke="#666" stroke-width="0.44" opacity="0.54"/><path d="M485.9 405.8 L502.1 399.4" stroke="#666" stroke-width="0.27" opacity="0.49"/><path d="M496.6 415.4 L510.0 410.1" stroke="#666" stroke-width="0.24" opacity="0.70"/><path d="M496.2 422.8 L517.2 414.4" stroke="#666" stroke-width="0.39" opacity="0.49"/><path d="M481.0 418.4 L500.4 410.6" stroke="#666" stroke-width="0.25" opacity="0.55"/><path d="M478.2 418.8 L496.0 411.7" stroke="#666" stroke-width="0.41" opacity="0.86"/><path d="M489.4 412.0 L503.6 406.3" stroke="#666" stroke-width="0.36" opacity="0.87"/><path d="M480.0 413.2 L501.4 404.6" stroke="#666" stroke-width="0.23" opacity="0.73"/><path d="M483.5 416.3 L508.2 406.3" stroke="#666" stroke-width="0.21" opacity="0.75"/><path d="M490.6 422.2 L506.0 416.0" stroke="#666" stroke-width="0.43" opacity="0.88"/></g>
<path d="M443.2 420 L466.5 467.5 M445 420 L468 467.5" stroke="#555" stroke-width="0.55"/>
<g><path d="M440.8 419.0 Q432.5 422.4 424.7 427.0 Q433.1 423.6 440.8 419.0Z" fill="#111" opacity="0.71"/><path d="M441.3 435.4 Q434.8 445.0 429.6 455.4 Q436.1 445.8 441.3 435.4Z" fill="#111" opacity="0.43"/><path d="M433.8 423.3 Q424.3 428.1 415.1 433.3 Q424.5 428.5 433.8 423.3Z" fill="#111" opacity="0.66"/><path d="M443.4 418.5 Q436.3 421.8 429.9 426.1 Q436.9 422.8 443.4 418.5Z" fill="#111" opacity="0.38"/><path d="M439.0 424.4 Q427.2 433.1 415.8 442.2 Q427.6 433.5 439.0 424.4Z" fill="#111" opacity="0.72"/><path d="M447.7 423.6 Q439.8 434.9 433.0 446.8 Q440.8 435.5 447.7 423.6Z" fill="#111" opacity="0.51"/><path d="M440.3 422.0 Q432.0 427.3 424.1 433.0 Q432.4 427.8 440.3 422.0Z" fill="#111" opacity="0.38"/><path d="M440.2 422.7 Q430.4 429.0 421.3 436.4 Q431.1 430.1 440.2 422.7Z" fill="#111" opacity="0.35"/><path d="M430.9 425.2 Q420.8 430.3 411.0 436.1 Q421.2 431.0 430.9 425.2Z" fill="#111" opacity="0.40"/><path d="M444.4 426.8 Q437.9 434.6 432.6 443.3 Q439.1 435.5 444.4 426.8Z" fill="#111" opacity="0.31"/><path d="M440.9 430.5 Q433.4 439.6 426.7 449.3 Q434.3 440.3 440.9 430.5Z" fill="#111" opacity="0.32"/><path d="M451.7 420.5 Q447.6 429.6 444.4 439.0 Q448.5 429.9 451.7 420.5Z" fill="#111" opacity="0.68"/><path d="M440.4 434.2 Q433.4 443.4 427.7 453.4 Q434.7 444.2 440.4 434.2Z" fill="#111" opacity="0.44"/><path d="M439.8 425.6 Q432.5 431.7 425.5 438.4 Q432.9 432.2 439.8 425.6Z" fill="#111" opacity="0.61"/><path d="M434.1 429.3 Q424.4 437.0 415.1 445.0 Q424.8 437.4 434.1 429.3Z" fill="#111" opacity="0.35"/><path d="M442.1 420.0 Q434.5 424.0 427.5 429.1 Q435.2 425.0 442.1 420.0Z" fill="#111" opacity="0.40"/><path d="M442.7 423.4 Q431.4 433.2 420.7 443.7 Q432.1 433.9 442.7 423.4Z" fill="#111" opacity="0.32"/><path d="M444.5 439.5 Q441.2 446.1 439.3 453.1 Q442.6 446.6 444.5 439.5Z" fill="#111" opacity="0.58"/><path d="M446.2 431.9 Q440.7 442.6 436.5 453.9 Q442.0 443.1 446.2 431.9Z" fill="#111" opacity="0.32"/><path d="M445.5 417.0 Q439.1 419.9 433.0 423.6 Q439.4 420.6 445.5 417.0Z" fill="#111" opacity="0.32"/><path d="M441.2 419.4 Q433.8 423.1 426.5 427.3 Q434.0 423.6 441.2 419.4Z" fill="#111" opacity="0.73"/><path d="M443.8 437.5 Q440.2 444.3 437.6 451.5 Q441.2 444.7 443.8 437.5Z" fill="#111" opacity="0.72"/><path d="M441.1 425.3 Q430.4 434.5 420.7 444.7 Q431.4 435.6 441.1 425.3Z" fill="#111" opacity="0.56"/><path d="M435.4 426.2 Q424.7 433.4 414.5 441.3 Q425.2 434.1 435.4 426.2Z" fill="#111" opacity="0.50"/><path d="M447.7 422.6 Q441.6 430.7 436.3 439.3 Q442.5 431.3 447.7 422.6Z" fill="#111" opacity="0.47"/><path d="M448.8 425.3 Q443.6 434.8 439.6 444.9 Q444.8 435.4 448.8 425.3Z" fill="#111" opacity="0.31"/><path d="M445.5 419.6 Q436.1 426.1 427.8 433.8 Q437.1 427.3 445.5 419.6Z" fill="#111" opacity="0.48"/><path d="M450.4 422.6 Q444.1 435.8 438.7 449.4 Q444.9 436.2 450.4 422.6Z" fill="#111" opacity="0.45"/><path d="M432.8 427.9 Q425.6 432.8 418.6 438.1 Q425.9 433.3 432.8 427.9Z" fill="#111" opacity="0.31"/><path d="M441.0 428.1 Q434.1 435.0 428.1 442.8 Q435.0 435.8 441.0 428.1Z" fill="#111" opacity="0.53"/><path d="M447.6 426.0 Q441.1 437.3 435.4 449.2 Q442.0 437.8 447.6 426.0Z" fill="#111" opacity="0.75"/><path d="M438.6 435.3 Q432.1 443.4 426.7 452.2 Q433.1 444.1 438.6 435.3Z" fill="#111" opacity="0.36"/><path d="M436.9 423.5 Q428.8 427.9 421.4 433.4 Q429.5 429.1 436.9 423.5Z" fill="#111" opacity="0.34"/><path d="M442.3 437.3 Q435.2 450.4 428.8 464.0 Q435.9 450.8 442.3 437.3Z" fill="#111" opacity="0.58"/><path d="M440.8 430.7 Q434.3 438.7 428.3 447.1 Q434.8 439.1 440.8 430.7Z" fill="#111" opacity="0.48"/><path d="M448.0 420.0 Q440.7 427.1 434.6 435.3 Q441.9 428.2 448.0 420.0Z" fill="#111" opacity="0.37"/><path d="M448.6 424.6 Q442.8 435.1 437.7 445.9 Q443.4 435.4 448.6 424.6Z" fill="#111" opacity="0.68"/><path d="M446.9 423.8 Q441.0 431.7 435.8 440.0 Q441.7 432.2 446.9 423.8Z" fill="#111" opacity="0.54"/><path d="M441.0 429.3 Q436.0 434.4 432.1 440.3 Q437.1 435.2 441.0 429.3Z" fill="#111" opacity="0.75"/><path d="M444.0 421.6 Q435.0 428.4 426.9 436.3 Q435.9 429.5 444.0 421.6Z" fill="#111" opacity="0.50"/></g>
<g stroke="#0a0a0a" stroke-width="1.2" stroke-linecap="round" fill="none"><path d="M453.6 386 L455.3 390.4 M457 387 L458.8 391.3 M454.5 398.2 L465 390.4 M465 393.9 L471 392.2 M462.3 400 L474.4 393 M478 393.9 L480 397.5 M480.5 393 L482.5 396.5 M479.7 401.7 L483.1 399"/></g>
<path d="M371.0 280.0 L388.0 272.0 L392.0 289.0 L373.0 304.0 Z" fill="url(#hatch)" stroke="#111" stroke-width="0.8" stroke-linejoin="round"/>
<path d="M362.0 335.0 L373.0 304.0 L386.0 289.0 L406.0 328.0 L378.0 373.0 Z" fill="url(#plate)" stroke="#111" stroke-width="0.8" stroke-linejoin="round"/>
<path d="M373 304 L362 335" stroke="#0a0a0a" stroke-width="1.5"/>
<path d="M386 289.5 L403.6 325.5 M388.6 288.5 L405.4 322 M383.6 291 L401.4 328" stroke="#f4f4f4" stroke-width="0.75"/>
<path d="M356.7 281.0 L375.0 277.5 L371.0 298.0 L368.4 313.5 L357.7 309.0 Z" fill="url(#speck)" stroke="#111" stroke-width="0.8" stroke-linejoin="round"/>
<path d="M364 258.6 L374.4 280" stroke="#0a0a0a" stroke-width="5.5"/>
<ellipse cx="359.8" cy="262" rx="6.3" ry="9.3" transform="rotate(-25 359.8 262)" fill="#fff" stroke="#111" stroke-width="1"/>
<ellipse cx="358.8" cy="265" rx="2.8" ry="4.2" transform="rotate(-25 358.8 265)" fill="none" stroke="#333" stroke-width="0.7"/>
<path d="M362 254.5 L367 262" stroke="#0a0a0a" stroke-width="3"/>
<path d="M376.0 272.0 L397.0 266.0 L410.0 262.0 L412.0 280.0 L398.0 290.0 L390.0 278.0 Z" fill="url(#hatch2)" stroke="#111" stroke-width="0.8" stroke-linejoin="round"/>
<path d="M388.0 276.0 L400.0 271.0 L406.0 280.0 L398.0 287.0 Z" fill="#1e1e1e" opacity="0.5"/>
<path d="M376.8 260.3 L421.4 244.7 L426.8 257.6 L410.5 267.0 L390.3 271.8 Z" fill="url(#hatch2)" stroke="#111" stroke-width="0.8" stroke-linejoin="round"/>
<path d="M378.0 260.0 L400.0 262.0 L426.0 255.0 L410.5 267.0 L390.3 271.8 Z" fill="#1a1a1a" opacity="0.45"/>
<path d="M380.0 258.0 L421.0 244.5 L424.0 250.0 L398.0 257.0 Z" fill="#222" opacity="0.25"/>
<path d="M392 262 C 400 258.5, 408 256, 417 255.5" stroke="#fff" stroke-width="1.1" fill="none" opacity="0.85"/>
<path d="M401 262 l2 0 M406 261 l1.5 0" stroke="#fff" stroke-width="1.2"/>
<path d="M394.8 273.0 L410.0 268.0 L420.0 280.0 L430.0 292.0 L428.0 339.5 L417.6 356.0 L388.6 352.0 L398.0 335.0 L407.0 325.0 L396.0 295.0 Z" fill="url(#speck)" stroke="#111" stroke-width="0.8" stroke-linejoin="round"/>
<path d="M404 330 C 410 338, 415 344, 419 347" stroke="#222" stroke-width="0.6" fill="none"/>
<path d="M421.0 311.0 L434.0 308.0 L435.0 332.0 L423.0 334.0 Z" fill="url(#hatch)" stroke="#111" stroke-width="0.8" stroke-linejoin="round"/>
<path d="M420.0 304.0 L434.0 297.0 L441.0 300.0 L438.0 312.0 L423.0 313.0 Z" fill="#111"/>
<path d="M436.5 301.6 L454.0 303.0 L460.8 313.8 L466.2 334.0 L463.0 347.0 L457.0 354.0 L440.6 350.8 L428.5 342.0 L432.0 320.0 Z" fill="url(#speck)" stroke="#111" stroke-width="0.8" stroke-linejoin="round"/>
<path d="M452.0 288.0 L458.0 268.0 L463.0 274.0 L468.0 307.0 L457.0 301.0 Z" fill="url(#hatch)" stroke="#111" stroke-width="0.8" stroke-linejoin="round"/>
<path d="M441.0 251.0 L458.0 242.0 L466.0 250.0 L464.0 268.0 L455.0 274.0 L447.0 262.0 Z" fill="url(#speck)" stroke="#111" stroke-width="0.8" stroke-linejoin="round"/>
<path d="M455 245 C 458 252, 460 260, 458 268" stroke="#222" stroke-width="0.6" fill="none"/>
<path d="M427 256.5 C 417 260, 409.5 268, 408 279 C 407.5 289, 413 296.5, 423 299.5 C 429 301, 435 300.5, 440 298 C 431 295, 425 289, 424 280 C 423.5 270, 426.5 262, 433 258.5 Z" fill="url(#hatch2)" stroke="#111" stroke-width="0.8"/>
<path d="M419 261 C 412 269, 411 282, 415 291 C 419 296, 427 299.5, 434 299 C 426 294, 422.5 286, 422.5 277 C 422.5 270, 425 263, 428 258 Z" fill="#111" opacity="0.5"/>
<ellipse cx="440.8" cy="278" rx="16.8" ry="19" fill="url(#grid)" stroke="#111" stroke-width="0.9"/>
<ellipse cx="440.8" cy="278" rx="16.8" ry="19" fill="url(#hatg)"/>
<circle cx="442.7" cy="270.5" r="1.8" fill="#1a1a1a"/>
<path d="M431 289 C 438 294, 450 294, 457.5 287.5 C 456 294.5, 448 298.5, 441 298 C 436 297.5, 432 293.5, 431 289 Z" fill="#fff" stroke="#111" stroke-width="0.8"/>
<path d="M457.5 282 C 461 286.5, 466 287.5, 470 284.5 C 474 281.5, 477.5 283.5, 476.8 287.5 C 476 291.5, 469 292.5, 463 290.5 C 460 289.5, 457.5 286, 457.5 282 Z" fill="#fff" stroke="#111" stroke-width="0.8"/>
<path d="M457 276 C 459 279, 462 282, 466 283.5" stroke="#111" stroke-width="0.7" fill="none"/>
<path d="M408.0 300.0 L427.0 293.0 L434.0 302.0 L412.0 312.0 Z" fill="#fff" stroke="#111" stroke-width="0.8" stroke-linejoin="round"/>
<path d="M412 312 L434 302" stroke="#0a0a0a" stroke-width="1.6"/>
<path d="M418.0 236.0 L456.0 223.5 L466.0 236.0 L466.0 241.0 L427.0 254.0 Z" fill="url(#dots)" stroke="#111" stroke-width="0.8" stroke-linejoin="round"/>
<path d="M466 237 C 472 236.5, 478 237, 482.3 241 C 488 242.5, 495 243.5, 500 245 C 505 244.5, 511 245, 517 246.5 C 513 248, 509 248.5, 507 249.5 C 510 251.5, 511 254, 509.5 257.5 C 507 261, 503.5 262, 501.5 261 C 502.5 258, 500.5 254.5, 497 253 C 490 253, 484 250.6, 482 250.6 C 478 252, 472 254, 466 253.5 Z" fill="#fff" stroke="#111" stroke-width="0.75"/>
<path d="M481.5 241 C 487 242.5, 492 243.5, 497 244.5 L 497.5 247.5 C 492 247, 486 246, 481.5 245.5 Z" fill="#1a1a1a"/>
<path d="M481.5 245.5 C 486 246.5, 492 247.5, 497.5 248 L 497 252.5 C 492 252.5, 486 251.5, 482 250.6 Z" fill="url(#hatch)" opacity="0.6"/>
<path d="M476 237.5 C 479 242, 479 249, 476 254 M478.5 238 C 481.5 243, 481.5 249, 479 253.5 M494 243.5 C 496 246, 496 250, 495 253 M496 244 C 498 247, 498 250, 497.5 253" stroke="#111" stroke-width="0.6" fill="none"/>
<path d="M396.4 354.3 L416.6 351.6 L425.0 370.0 L437.0 395.0 L447.0 410.0 L434.0 416.0 L423.4 411.0 L410.0 385.0 Z" fill="#d4d4d4" stroke="#111" stroke-width="0.8" stroke-linejoin="round"/>
<path d="M398.0 356.0 L405.0 354.0 L414.0 378.0 L409.0 382.0 Z" fill="#f6f6f6"/>
<path d="M409.0 378.0 L425.0 374.0 L437.0 395.0 L444.0 408.0 L434.0 413.0 L423.0 409.0 Z" fill="url(#hatch2)" opacity="0.9"/>
<path d="M401.8 368 C 410 365.5, 419 365.5, 426 369 L 426 376 C 419 373, 410 373, 402.5 375.5 Z" fill="#eee" stroke="#111" stroke-width="0.7"/>
<path d="M413 382 L428 406 M418 380 L434 404" stroke="#111" stroke-width="1.2" opacity="0.75"/>
<circle cx="434" cy="412.5" r="8.6" fill="#f4f4f4" stroke="#111" stroke-width="0.9"/>
<circle cx="436" cy="414" r="4.2" fill="none" stroke="#333" stroke-width="0.8"/>
<path d="M426 405 C 430 402, 438 402, 442 406" stroke="#111" stroke-width="1" fill="none"/>
<path d="M421 404 C 423 410, 426 415, 430 419" stroke="#111" stroke-width="1.4" fill="none" opacity="0.8"/>
<path d="M436.4 350.3 L445.8 352 L445.2 361 L437 360 Z" fill="#0e0e0e"/>
<path d="M435.5 359 C 434 365, 435.5 373, 439 377.5 C 442.5 379, 446.5 377, 447 372 C 447.5 367, 446.5 362, 445 359.5 Z" fill="#fff" stroke="#111" stroke-width="0.8"/>
<path d="M437 371 C 439.5 369, 443.5 369, 446 371.5 M441 369.5 L441 376" stroke="#111" stroke-width="0.7" fill="none"/>
<path d="M562 307 C 557 312, 551.6 316.7, 541.8 320.3 C 535 322.5, 530.3 323.8, 526 329 C 523 333, 523 338.5, 527.6 341.4 C 529.5 342, 531 340.5, 531 338.5 C 528.5 339, 526.5 337, 527 333 C 528.5 328.5, 534 325.5, 542.5 322 C 551 318.5, 557 314, 562.5 309.5 Z" fill="#151515"/>
<path d="M539 352 C 541 346, 547 343.5, 552 344 C 557 346, 559 352, 558 358 C 557 363, 553 366.5, 546 367 C 541 366, 538 361, 539 352 Z" fill="#fff" stroke="#222" stroke-width="0.6"/>
<path d="M539.5 354 C 539 360, 541 365, 546 367 C 542 368, 536 367, 535 363 C 535.5 359, 537 356, 539.5 354 Z" fill="#777" opacity="0.8"/>
<path d="M556.5 342 C 565 339, 576 337, 583 337 C 588 340, 588.5 348, 586 355 C 583 360, 576 362, 566 362 C 561 360, 557.5 355, 556.5 348 Z" fill="#fff" stroke="#222" stroke-width="0.6"/>
<path d="M566 349 C 572 346, 579 345, 584 347 M583 337 C 589 342, 590 350, 588 355" stroke="#333" stroke-width="0.5" fill="none"/>
<path d="M564 362.6 C 568 362, 572 363, 574 366 C 574 369.5, 570 371.5, 566 371 C 563.5 369, 563 365.5, 564 362.6 Z" fill="#fff" stroke="#222" stroke-width="0.6"/>
<path d="M566 368 C 571 366, 576 369, 581.4 372 L 579 378 C 574 377, 569 374, 566.4 371 Z" fill="#1c1c1c" opacity="0.85"/>
<path d="M549 331 C 553 332, 557 336, 560 342 C 562 347, 562.6 352, 561 356 C 558 357, 554 356, 552 353 C 551 347, 549 338, 547.5 333 Z" fill="#fff" stroke="#222" stroke-width="0.6"/>
<path d="M557.6 334.5 L571 333.8 L572.6 341 L560 342.6 Z" fill="#161616"/>
<path d="M561 337 l4 -0.5 M566 339 l3 -0.3" stroke="#ddd" stroke-width="0.6"/>
<path d="M553.5 319 C 560 316, 570 315.5, 577 317 C 581 320, 581 326, 579 329.6 C 572 331, 562 331, 556 329.5 C 553 327, 552.5 322, 553.5 319 Z" fill="#fff" stroke="#222" stroke-width="0.65"/>
<path d="M570 314.7 C 576 309, 582 305.5, 586 305 C 591 306, 594 310, 593.8 318 C 593.5 324, 592 328, 590 330 C 585 331, 580 328, 576 324 C 573 320, 571 317, 570 314.7 Z" fill="#fff" stroke="#222" stroke-width="0.65"/>
<path d="M574 320 C 579 318, 584 320, 588 325 M586 305 C 588 312, 589 320, 590 330" stroke="#333" stroke-width="0.5" fill="none"/>
<path d="M561 306 C 560 301, 562 297, 566.2 294 C 570 292.5, 574.7 292.3, 578 293 C 581 294, 583.5 297, 584 301 C 584.5 305, 583.5 309, 580.5 312.6 L 579 316 L 576.8 312 L 574.5 315.5 L 572.6 311.5 L 570 314 L 568.4 310.5 L 565.2 313.5 L 564 309 Z" fill="#333"/>
<path d="M568 305.5 C 571 304.5, 575.5 305, 578 307 C 577.5 310, 575.5 312, 572.5 312 C 570 311, 568.5 308.5, 568 305.5 Z" fill="#fff"/>
<path d="M569.5 307.5 l2 0.4 M574.5 307.8 l2 0.4" stroke="#111" stroke-width="0.8"/>
<path d="M564 298 C 569 296, 575 295.5, 581 296.5" stroke="#777" stroke-width="0.5" fill="none"/>
<path d="M579 291.4 L583.5 290.5 L583.2 296.7 L579.5 296 Z" fill="#2a2a2a"/>
<path d="M578 296.6 L587.5 297 L587.3 298.9 L578 298.6 Z" fill="#fff" stroke="#333" stroke-width="0.4"/>
<path d="M558 322 C 563 325, 568 326, 574 325 M562 346 C 566 350, 572 352, 580 351 M545 352 C 548 356, 551 359, 553 364 M580 338 C 583 344, 584 350, 582 356 M587 312 C 589 318, 590 323, 589 328" stroke="#444" stroke-width="0.45" fill="none"/>
<g><path d="M520.3 341.4 L551.2 330.3" stroke="#333" stroke-width="0.28" opacity="0.69"/><path d="M531.9 352.8 L551.4 345.7" stroke="#333" stroke-width="0.44" opacity="0.66"/><path d="M530.5 375.5 L548.4 369.0" stroke="#333" stroke-width="0.42" opacity="0.42"/><path d="M526.1 350.4 L552.4 340.9" stroke="#333" stroke-width="0.31" opacity="0.63"/><path d="M531.3 361.9 L554.0 353.7" stroke="#333" stroke-width="0.21" opacity="0.57"/><path d="M534.6 340.2 L548.1 335.4" stroke="#333" stroke-width="0.26" opacity="0.46"/><path d="M523.7 350.6 L557.1 338.6" stroke="#333" stroke-width="0.24" opacity="0.38"/><path d="M524.0 343.9 L553.6 333.2" stroke="#333" stroke-width="0.42" opacity="0.53"/><path d="M544.3 356.4 L558.5 351.3" stroke="#333" stroke-width="0.29" opacity="0.45"/><path d="M536.3 315.8 L552.3 310.0" stroke="#333" stroke-width="0.36" opacity="0.42"/><path d="M537.4 336.5 L561.1 328.0" stroke="#333" stroke-width="0.44" opacity="0.55"/><path d="M542.6 346.2 L559.4 340.1" stroke="#333" stroke-width="0.42" opacity="0.46"/><path d="M541.5 314.2 L555.9 309.0" stroke="#333" stroke-width="0.34" opacity="0.55"/><path d="M545.4 357.8 L557.7 353.4" stroke="#333" stroke-width="0.20" opacity="0.58"/><path d="M539.7 349.7 L560.8 342.0" stroke="#333" stroke-width="0.22" opacity="0.31"/><path d="M520.8 317.7 L550.5 307.0" stroke="#333" stroke-width="0.34" opacity="0.65"/><path d="M539.9 370.5 L555.2 365.0" stroke="#333" stroke-width="0.25" opacity="0.54"/><path d="M531.5 323.3 L555.3 314.7" stroke="#333" stroke-width="0.21" opacity="0.33"/><path d="M532.1 376.7 L554.9 368.5" stroke="#333" stroke-width="0.31" opacity="0.62"/><path d="M532.3 357.7 L557.6 348.6" stroke="#333" stroke-width="0.24" opacity="0.40"/><path d="M522.0 333.0 L548.5 323.5" stroke="#333" stroke-width="0.41" opacity="0.68"/><path d="M524.3 318.7 L550.7 309.2" stroke="#333" stroke-width="0.20" opacity="0.39"/><path d="M545.7 336.2 L558.7 331.5" stroke="#333" stroke-width="0.21" opacity="0.40"/><path d="M524.7 329.1 L550.2 319.9" stroke="#333" stroke-width="0.24" opacity="0.30"/><path d="M532.8 370.9 L554.4 363.1" stroke="#333" stroke-width="0.26" opacity="0.65"/><path d="M521.4 380.6 L548.9 370.6" stroke="#333" stroke-width="0.37" opacity="0.53"/><path d="M525.2 342.9 L553.6 332.7" stroke="#333" stroke-width="0.21" opacity="0.65"/><path d="M529.7 318.3 L550.4 310.9" stroke="#333" stroke-width="0.20" opacity="0.65"/><path d="M533.4 338.6 L553.1 331.5" stroke="#333" stroke-width="0.42" opacity="0.43"/><path d="M539.7 356.5 L561.5 348.6" stroke="#333" stroke-width="0.43" opacity="0.52"/><path d="M534.6 338.1 L554.5 331.0" stroke="#333" stroke-width="0.31" opacity="0.41"/><path d="M541.7 313.0 L559.3 306.7" stroke="#333" stroke-width="0.23" opacity="0.38"/><path d="M534.3 350.4 L559.0 341.5" stroke="#333" stroke-width="0.32" opacity="0.62"/><path d="M536.2 327.2 L553.2 321.1" stroke="#333" stroke-width="0.30" opacity="0.55"/><path d="M529.2 352.2 L552.2 343.9" stroke="#333" stroke-width="0.25" opacity="0.64"/><path d="M526.2 362.8 L561.2 350.2" stroke="#333" stroke-width="0.35" opacity="0.48"/><path d="M534.2 379.0 L555.5 371.3" stroke="#333" stroke-width="0.33" opacity="0.35"/><path d="M543.4 360.4 L557.5 355.3" stroke="#333" stroke-width="0.41" opacity="0.59"/><path d="M519.9 366.5 L548.4 356.2" stroke="#333" stroke-width="0.24" opacity="0.31"/><path d="M527.9 363.4 L557.7 352.6" stroke="#333" stroke-width="0.26" opacity="0.38"/></g>
<path d="M512 378 C 525 372, 533 366, 540 362 L 541 364 C 533 369, 524 375, 513 380 Z" fill="#1a1a1a" opacity="0.5"/>
<g><path d="M565.2 315.1 L593.5 305.4" stroke="#555" stroke-width="0.31" opacity="0.48"/><path d="M539.8 361.5 L551.6 357.5" stroke="#555" stroke-width="0.21" opacity="0.50"/><path d="M537.1 337.6 L563.9 328.5" stroke="#555" stroke-width="0.24" opacity="0.44"/><path d="M549.0 378.8 L577.7 369.0" stroke="#555" stroke-width="0.19" opacity="0.36"/><path d="M560.0 364.8 L588.0 355.3" stroke="#555" stroke-width="0.16" opacity="0.46"/><path d="M549.7 386.1 L567.8 380.0" stroke="#555" stroke-width="0.33" opacity="0.28"/><path d="M535.3 329.2 L557.5 321.7" stroke="#555" stroke-width="0.19" opacity="0.45"/><path d="M545.7 355.0 L564.3 348.7" stroke="#555" stroke-width="0.30" opacity="0.30"/><path d="M561.7 351.9 L584.3 344.2" stroke="#555" stroke-width="0.34" opacity="0.42"/><path d="M533.2 346.8 L553.7 339.8" stroke="#555" stroke-width="0.34" opacity="0.45"/><path d="M562.3 379.0 L574.5 374.9" stroke="#555" stroke-width="0.30" opacity="0.45"/><path d="M572.4 377.4 L594.1 370.0" stroke="#555" stroke-width="0.29" opacity="0.54"/><path d="M564.5 308.5 L580.9 303.0" stroke="#555" stroke-width="0.31" opacity="0.35"/><path d="M569.9 341.8 L594.8 333.4" stroke="#555" stroke-width="0.35" opacity="0.43"/><path d="M536.3 348.0 L553.2 342.2" stroke="#555" stroke-width="0.34" opacity="0.38"/><path d="M536.6 348.3 L560.4 340.2" stroke="#555" stroke-width="0.32" opacity="0.44"/><path d="M556.4 358.9 L570.5 354.1" stroke="#555" stroke-width="0.28" opacity="0.50"/><path d="M572.9 343.8 L586.7 339.2" stroke="#555" stroke-width="0.34" opacity="0.50"/><path d="M560.3 318.5 L573.5 314.0" stroke="#555" stroke-width="0.31" opacity="0.32"/><path d="M542.3 381.6 L555.6 377.1" stroke="#555" stroke-width="0.22" opacity="0.28"/><path d="M554.5 319.0 L578.2 311.0" stroke="#555" stroke-width="0.25" opacity="0.39"/><path d="M558.5 308.6 L582.3 300.5" stroke="#555" stroke-width="0.18" opacity="0.44"/><path d="M557.7 318.9 L581.9 310.7" stroke="#555" stroke-width="0.27" opacity="0.32"/><path d="M559.3 315.7 L577.8 309.4" stroke="#555" stroke-width="0.34" opacity="0.45"/><path d="M522.5 387.5 L549.3 378.3" stroke="#555" stroke-width="0.23" opacity="0.31"/><path d="M561.7 307.7 L581.4 301.0" stroke="#555" stroke-width="0.16" opacity="0.52"/><path d="M542.1 314.3 L558.2 308.8" stroke="#555" stroke-width="0.34" opacity="0.30"/><path d="M550.9 350.9 L566.7 345.5" stroke="#555" stroke-width="0.26" opacity="0.26"/><path d="M548.4 385.1 L568.1 378.4" stroke="#555" stroke-width="0.30" opacity="0.35"/><path d="M561.4 328.9 L584.3 321.2" stroke="#555" stroke-width="0.34" opacity="0.40"/><path d="M569.8 331.6 L587.0 325.7" stroke="#555" stroke-width="0.17" opacity="0.34"/><path d="M552.8 366.6 L576.8 358.5" stroke="#555" stroke-width="0.28" opacity="0.27"/><path d="M566.9 308.1 L584.8 302.0" stroke="#555" stroke-width="0.18" opacity="0.36"/><path d="M569.8 351.5 L597.7 342.0" stroke="#555" stroke-width="0.29" opacity="0.28"/><path d="M560.8 332.4 L583.1 324.8" stroke="#555" stroke-width="0.23" opacity="0.44"/><path d="M548.6 322.7 L561.4 318.4" stroke="#555" stroke-width="0.33" opacity="0.50"/><path d="M543.1 308.7 L555.2 304.6" stroke="#555" stroke-width="0.31" opacity="0.53"/><path d="M589.0 336.0 L600.0 332.3" stroke="#555" stroke-width="0.19" opacity="0.38"/><path d="M561.8 387.1 L583.8 379.7" stroke="#555" stroke-width="0.28" opacity="0.29"/><path d="M530.9 318.8 L553.6 311.1" stroke="#555" stroke-width="0.23" opacity="0.54"/><path d="M576.7 343.2 L591.0 338.4" stroke="#555" stroke-width="0.22" opacity="0.26"/><path d="M556.4 373.6 L576.6 366.7" stroke="#555" stroke-width="0.18" opacity="0.27"/><path d="M515.5 366.3 L543.3 356.9" stroke="#555" stroke-width="0.16" opacity="0.25"/><path d="M572.9 322.4 L597.4 314.1" stroke="#555" stroke-width="0.23" opacity="0.25"/><path d="M566.9 361.3 L588.2 354.0" stroke="#555" stroke-width="0.24" opacity="0.41"/><path d="M550.3 341.3 L571.0 334.3" stroke="#555" stroke-width="0.28" opacity="0.30"/><path d="M552.5 352.7 L564.1 348.7" stroke="#555" stroke-width="0.31" opacity="0.47"/><path d="M538.6 359.9 L559.9 352.7" stroke="#555" stroke-width="0.23" opacity="0.36"/><path d="M552.1 320.2 L579.4 310.9" stroke="#555" stroke-width="0.26" opacity="0.44"/><path d="M566.1 326.2 L590.9 317.8" stroke="#555" stroke-width="0.29" opacity="0.29"/><path d="M545.9 354.2 L574.7 344.4" stroke="#555" stroke-width="0.22" opacity="0.32"/><path d="M551.9 325.8 L566.5 320.9" stroke="#555" stroke-width="0.34" opacity="0.31"/><path d="M558.2 326.8 L585.0 317.7" stroke="#555" stroke-width="0.28" opacity="0.31"/><path d="M565.7 361.7 L580.2 356.7" stroke="#555" stroke-width="0.24" opacity="0.41"/><path d="M553.6 368.4 L581.8 358.8" stroke="#555" stroke-width="0.26" opacity="0.51"/><path d="M568.1 368.3 L580.8 364.0" stroke="#555" stroke-width="0.25" opacity="0.40"/><path d="M567.8 383.5 L590.3 375.8" stroke="#555" stroke-width="0.34" opacity="0.40"/><path d="M546.7 362.0 L567.6 354.9" stroke="#555" stroke-width="0.34" opacity="0.31"/><path d="M551.0 313.4 L568.5 307.4" stroke="#555" stroke-width="0.27" opacity="0.37"/><path d="M518.8 311.5 L542.8 303.3" stroke="#555" stroke-width="0.34" opacity="0.39"/></g>
<g stroke="#45327e" stroke-width="1.25" fill="none" stroke-linejoin="miter"><path d="M345.1 61.5 H609.4 V146.3 L345.1 194 Z"/><path d="M345.1 219.5 L609.4 172 V468.7 H345.1 Z"/></g>
</svg>
<svg class="a" style="left:903px;top:29px" width="14" height="70" viewBox="0 0 14 70"><rect x="2" y="1.5" width="8" height="6" fill="#fff" stroke="#d03030" stroke-width="1.2"/><path d="M11 3.5 V9 H4" fill="none" stroke="#ddd" stroke-width="1"/><ellipse cx="7" cy="16.5" rx="4.6" ry="1.5" fill="none" stroke="#d8d8d8" stroke-width="0.7"/><ellipse cx="7" cy="19" rx="4.8" ry="1.5" fill="none" stroke="#e8e8e8" stroke-width="0.8"/><ellipse cx="7" cy="21.5" rx="4.6" ry="1.3" fill="#bdbdbd"/><rect x="4.5" y="31" width="5.5" height="5.5" fill="#2e2e2e"/><circle cx="6" cy="30.5" r="1" fill="#aaa"/><circle cx="9" cy="30" r="1" fill="#999"/><rect x="2.5" y="42.5" width="9" height="9" fill="#fff"/><path d="M4 46.5 C 4 44, 7 43.5, 7.5 45.5 M10 47.5 C 10 50, 7 50.5, 6.5 48.5" fill="none" stroke="#111" stroke-width="1.6"/><path d="M6 45 L8.5 44.5 L8 47Z M8 49 L5.5 49.5 L6 47Z" fill="#111"/><path d="M3 65 H11" stroke="#222" stroke-width="1.4"/><path d="M4 61 L6 63.5 L11 57" fill="none" stroke="#d02020" stroke-width="1.2"/></svg>
</body></html>
